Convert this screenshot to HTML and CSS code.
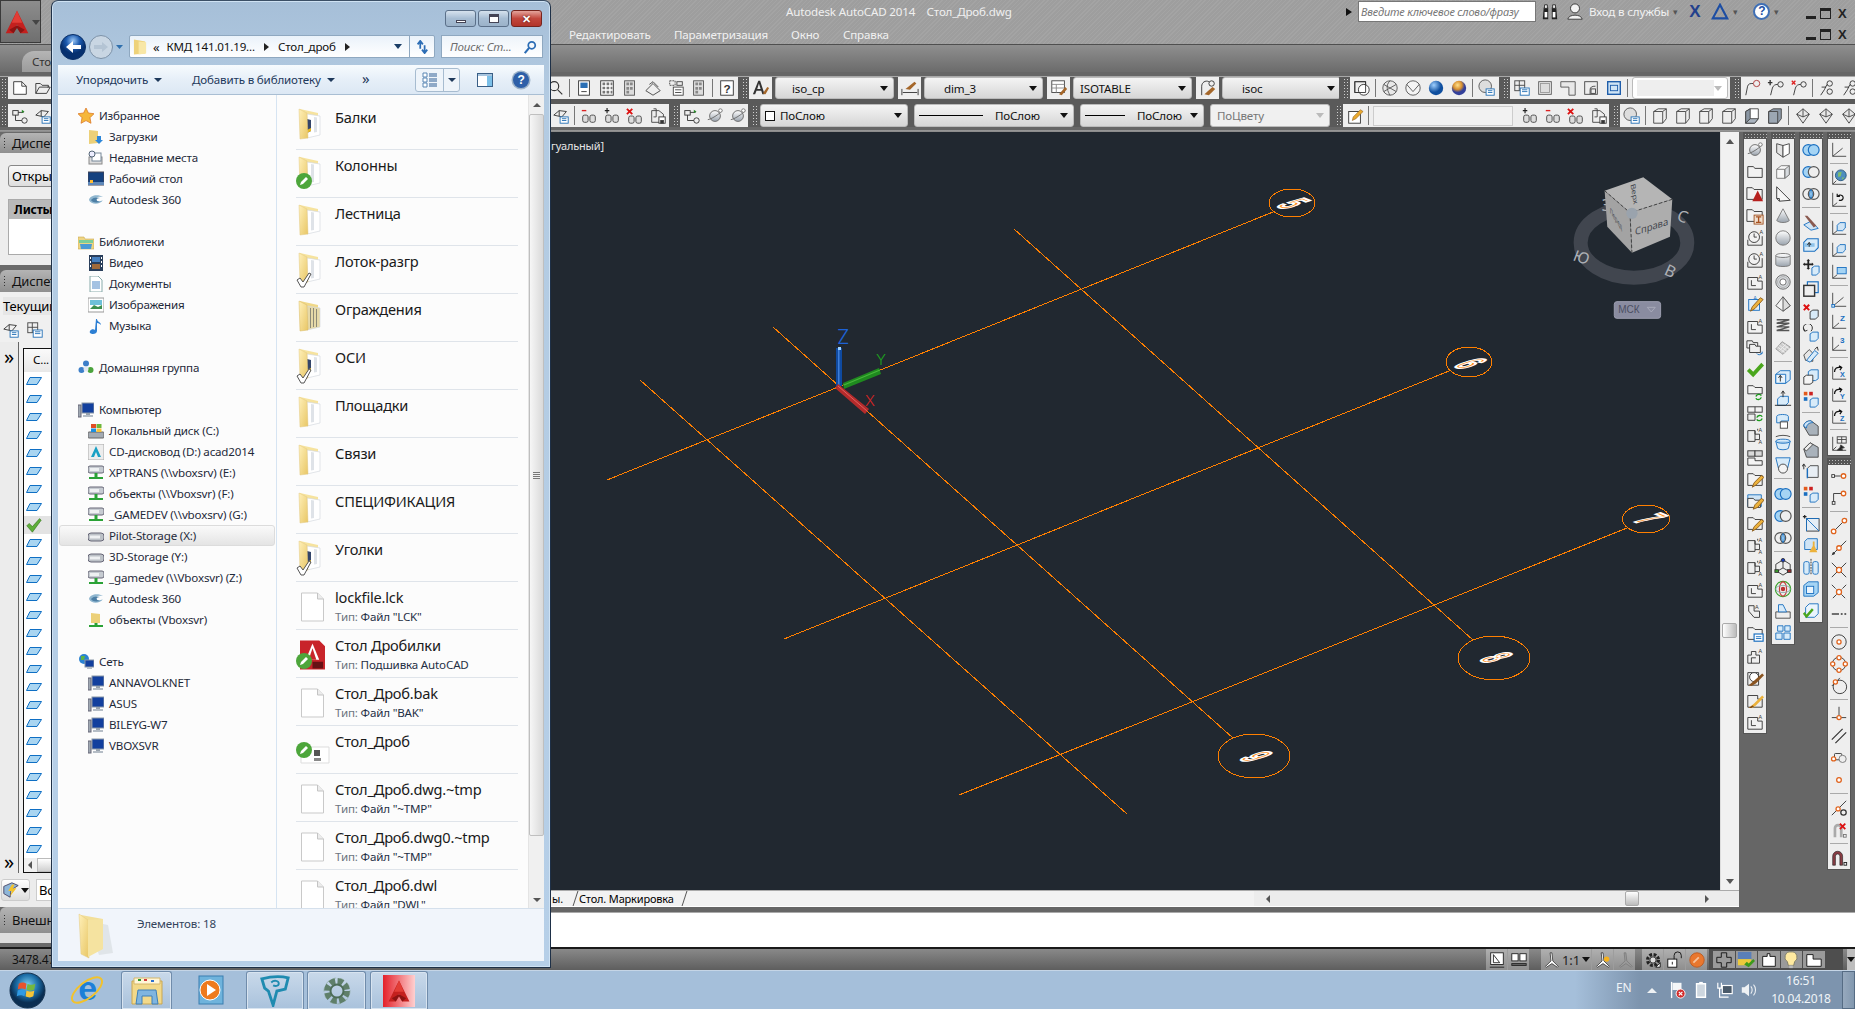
FILE: index.html
```html
<!DOCTYPE html>
<html lang="ru">
<head>
<meta charset="utf-8">
<title>Autodesk AutoCAD 2014</title>
<link rel="stylesheet" href="styles.css">
</head>
<body>
<svg class="sprite" xmlns="http://www.w3.org/2000/svg">
<defs>
<linearGradient id="fy" x1="0" y1="0" x2="1" y2="1"><stop offset="0" stop-color="#fff0b8"/><stop offset="1" stop-color="#e8c665"/></linearGradient>
<linearGradient id="sil" x1="0" y1="0" x2="0" y2="1"><stop offset="0" stop-color="#fff"/><stop offset="1" stop-color="#9aa3ad"/></linearGradient>
<radialGradient id="blueb" cx=".35" cy=".3"><stop offset="0" stop-color="#9fd0ff"/><stop offset="1" stop-color="#0f4f9f"/></radialGradient>
<radialGradient id="goldb" cx=".4" cy=".3"><stop offset="0" stop-color="#ffe08a"/><stop offset=".6" stop-color="#d89030"/><stop offset="1" stop-color="#33409a"/></radialGradient>
<radialGradient id="orb" cx=".5" cy=".35"><stop offset="0" stop-color="#7fd0f0"/><stop offset=".6" stop-color="#1c6ea8"/><stop offset="1" stop-color="#0a2e52"/></radialGradient>
<radialGradient id="backb" cx=".5" cy=".25"><stop offset="0" stop-color="#9cc8f5"/><stop offset=".55" stop-color="#1b59ae"/><stop offset="1" stop-color="#06306f"/></radialGradient>
<symbol id="folder" viewBox="0 0 24 32"><path d="M2 1l18 4v21L2 29z" fill="#f6e39e"/><path d="M9 6l13 2v19L9 30z" fill="#fff" stroke="#d5dae0" stroke-width=".7"/><path d="M13 8l3 .5V26l-3 .6z" fill="#dfe3e8"/><path d="M1 1l8 4 1 25-8 1z" fill="url(#fy)" stroke="#e2c880" stroke-width=".5"/></symbol>
<symbol id="folder-d" viewBox="0 0 24 32"><path d="M2 1l18 4v21L2 29z" fill="#f6e39e"/><path d="M9 6l13 2v19L9 30z" fill="#fff" stroke="#d5dae0" stroke-width=".7"/><path d="M9 11l4 1v11l-4 2z" fill="#33456a"/><path d="M9 22l4-2v3l-4 2z" fill="#e8b820"/><path d="M16 9l3 .5V24l-3 .5z" fill="#dfe3e8"/><path d="M1 1l8 4 1 25-8 1z" fill="url(#fy)" stroke="#e2c880" stroke-width=".5"/></symbol>
<symbol id="folder-s" viewBox="0 0 24 32"><path d="M2 1l18 4v21L2 29z" fill="#f0d888"/><path d="M9 6l13 2v19L9 30z" fill="#e6d9a8" stroke="#d5dae0" stroke-width=".7"/><path d="M12 8h1v20h-1zm3 0h1v19h-1zm3 1h1v18h-1z" fill="#8d8a78"/><path d="M1 1l8 4 1 25-8 1z" fill="url(#fy)" stroke="#d8b860" stroke-width=".5"/></symbol>
<symbol id="doc" viewBox="0 0 24 30"><path d="M1 1h16l6 6v22H1z" fill="#fff" stroke="#c9c9c9"/><path d="M17 1v6h6" fill="#ececec" stroke="#c4c4c4"/></symbol>
<symbol id="ov-edit" viewBox="0 0 16 16"><circle cx="8" cy="8" r="8" fill="#4da63b"/><path d="M4 12l1-3 5-5 2 2-5 5z" fill="#fff"/></symbol>
<symbol id="ov-check" viewBox="0 0 16 16"><path d="M1 8l3-2 3 4 6-9 2 1-7 13H5z" fill="#fff" stroke="#555"/></symbol>
<symbol id="ssm" viewBox="0 0 26 30"><path d="M0 0h20l6 6v24H0z" fill="#c8242a"/><path d="M13 3l7 17H6z" fill="#fff"/><path d="M13 8l4 12H9z" fill="#c8242a"/><rect x="13" y="22" width="11" height="7" fill="#661014"/></symbol>
<symbol id="dwg" viewBox="0 0 30 18"><path d="M1 1h28v16H1z" fill="#fff" stroke="#ddd"/><rect x="14" y="4" width="6" height="6" fill="#555"/><rect x="14" y="12" width="7" height="3" fill="#888"/></symbol>
<symbol id="n-star" viewBox="0 0 16 16"><path d="M8 0l2.400 5 5.600.7-4 4 1 5.600-5-2.700-5 2.700 1-5.600-4-4L5.600 5z" fill="#f5b73b" stroke="#d96f1c" stroke-width=".7"/></symbol>
<symbol id="n-dl" viewBox="0 0 16 16"><path d="M1 1l9 1v12l-9 1z" fill="#ecd078"/><path d="M9 7h4v4h2l-4 4-4-4h2z" fill="#2d86d8"/></symbol>
<symbol id="n-rec" viewBox="0 0 16 16"><rect x="1" y="7" width="13" height="7" fill="#ddd" stroke="#888"/><rect x="4" y="3" width="9" height="8" fill="#fff" stroke="#789"/><circle cx="4" cy="4" r="3" fill="#eef" stroke="#567"/></symbol>
<symbol id="n-desk" viewBox="0 0 16 16"><rect y="1" width="16" height="13" fill="#14417f" stroke="#445"/><rect y="11" width="16" height="3" fill="#5f88b8"/><rect x="2" y="9" width="3" height="3" fill="#fb3"/></symbol>
<symbol id="n-360" viewBox="0 0 16 16"><path d="M1 8c1-5 9-6 14-3-6-1-8 1-7 3 2 2 6 1 7 0-3 5-12 5-14 0z" fill="#8fb6cf"/><path d="M3 8c2-3 7-3 9-2-4 0-5 3 0 4-5 1-8 0-9-2z" fill="#4d7fa5"/></symbol>
<symbol id="n-lib" viewBox="0 0 16 16"><path d="M0 3h6l1 2h9v10H0z" fill="#eed583" stroke="#c9a94f" stroke-width=".6"/><rect x="1" y="6" width="14" height="3" fill="#7ccf9a"/><path d="M2 10h12l-1 5H3z" fill="#4b9ad6"/></symbol>
<symbol id="n-vid" viewBox="0 0 16 16"><rect x="1" width="14" height="16" fill="#2a3f5c"/><rect x="4" y="2" width="8" height="5" fill="#4680c0"/><rect x="4" y="9" width="8" height="5" fill="#a06a3a"/><path d="M2 2h1v2H2zm0 4h1v2H2zm0 4h1v2H2zm11-8h1v2h-1zm0 4h1v2h-1zm0 4h1v2h-1z" fill="#fff"/></symbol>
<symbol id="n-doc" viewBox="0 0 16 16"><path d="M2 0h8l4 4v12H2z" fill="#fff" stroke="#8aa"/><path d="M4 6h8M4 8h8M4 10h8M4 12h8" stroke="#4a86c5"/></symbol>
<symbol id="n-pic" viewBox="0 0 16 16"><rect width="16" height="14" y="1" fill="#fff" stroke="#999"/><rect x="2" y="3" width="12" height="5" fill="#6ec0d8"/><path d="M2 12l4-4 4 2 4-2v4z" fill="#3c8f4f"/></symbol>
<symbol id="n-mus" viewBox="0 0 16 16"><path d="M8 1l1 0c0 3 4 3 4 6-1-1-2-2-4-2v8c0 2-2 3-4 3s-4-1-3-3 4-2 5-1z" fill="#2d7fd3"/></symbol>
<symbol id="n-home" viewBox="0 0 16 16"><circle cx="8" cy="3.500" r="3" fill="#3d7fc9"/><circle cx="3.500" cy="10" r="3" fill="#3d7fc9"/><circle cx="12.500" cy="10" r="3" fill="#4ba33d"/><circle cx="8" cy="9" r="2.500" fill="#e3e8f2"/></symbol>
<symbol id="n-pc" viewBox="0 0 16 16"><rect x="4" y="1" width="12" height="10" fill="#123f9e" stroke="#8896a6"/><rect x="8" y="11" width="4" height="2" fill="#98a2ad"/><rect x="5" y="13" width="10" height="2" fill="#b5bdc6"/><rect y="3" width="3" height="12" fill="#9fa8b2" stroke="#667"/></symbol>
<symbol id="n-c" viewBox="0 0 16 16"><rect y="9" width="16" height="6" rx="1" fill="#a4abb3" stroke="#666"/><rect x="3" y="1" width="5" height="4" fill="#e14d24"/><rect x="8.500" y="1" width="5" height="4" fill="#6fb73a"/><rect x="3" y="5.500" width="5" height="3.500" fill="#1d8fe0"/><rect x="8.500" y="5.500" width="5" height="3.500" fill="#f7c33c"/></symbol>
<symbol id="n-cd" viewBox="0 0 16 16"><rect width="16" height="16" fill="#ededed" stroke="#aaa"/><path d="M8 2l5 11h-3L8 8l-2 5H3z" fill="#1aa0c4"/></symbol>
<symbol id="n-net" viewBox="0 0 16 16"><rect y="1" width="16" height="7" rx="2" fill="#c6cbd1" stroke="#667"/><rect x="2" y="3" width="9" height="3" fill="#eef0f2"/><rect x="6.500" y="8" width="3" height="4" fill="#2aa236"/><rect x="1" y="12" width="14" height="2" fill="#2aa236"/></symbol>
<symbol id="n-disk" viewBox="0 0 16 16"><rect y="5" width="16" height="8" rx="3" fill="#bcc1c7" stroke="#667"/><rect x="2" y="7.500" width="10" height="3" fill="#eef0f2"/></symbol>
<symbol id="n-nf" viewBox="0 0 16 16"><path d="M3 1l9 1v9H3z" fill="#ecd078"/><rect x="6.500" y="11" width="3" height="2" fill="#2aa236"/><rect x="1" y="13" width="14" height="2" fill="#2aa236"/></symbol>
<symbol id="n-globe" viewBox="0 0 16 16"><circle cx="6" cy="5" r="5" fill="#2a82d2"/><path d="M3 2l4 0-1 4-3 0zM8 6l2 1-2 3z" fill="#5cb344"/><rect x="7" y="6" width="9" height="7" fill="#123f9e" stroke="#8896a6"/><rect x="9" y="13" width="5" height="2" fill="#b5bdc6"/></symbol>

<symbol id="t-new" viewBox="0 0 20 20"><path d="M3 3h9l5 5v9H3z" fill="#fff" stroke="#333"/><path d="M12 3v5h5" fill="none" stroke="#333"/></symbol>
<symbol id="t-open" viewBox="0 0 20 20"><path d="M2 16V5h5l2 2h7v2H6l-4 7h12l4-7h-3" fill="#eee" stroke="#333"/></symbol>
<symbol id="t-tree" viewBox="0 0 20 20" fill="none" stroke="#333"><rect x="2" y="4" width="6" height="5"/><circle cx="15" cy="15" r="3"/><path d="M5 9v6h7M8 6h6"/><path d="M12 3l3 2-3 2z" fill="#2a8a2a" stroke="none"/></symbol>
<symbol id="t-list" viewBox="0 0 20 20" fill="none" stroke="#333"><path d="M2 9l6-5 8 1-5 6zM8 4v6"/><rect x="9" y="11" width="9" height="7" fill="#fff" stroke="#226fb5"/><path d="M11 13h5M11 15h5" stroke="#226fb5"/></symbol>
<symbol id="t-zoom" viewBox="0 0 20 20" fill="none" stroke="#333" stroke-width="1.300"><circle cx="8" cy="8" r="5"/><path d="M12 12l5 5"/></symbol>
<symbol id="t-prop" viewBox="0 0 20 20" fill="none" stroke="#333"><rect x="4" y="2" width="12" height="16" fill="#fff"/><rect x="6" y="4" width="8" height="6" fill="#2a6fb5" stroke="none"/><path d="M7 14h6"/></symbol>
<symbol id="t-grid" viewBox="0 0 20 20"><rect x="3" y="2" width="14" height="16" fill="#fff" stroke="#333"/><path d="M5 4h3v3H5zm4.500 0h3v3h-3zM14 4h2v3h-2zM5 8.500h3v3H5zm4.500 0h3v3h-3zm4.500 0h2v3h-2zM5 13h3v3H5zm4.500 0h3v3h-3zm4.500 0h2v3h-2z" fill="#777"/></symbol>
<symbol id="t-calc" viewBox="0 0 20 20"><rect x="4" y="2" width="11" height="16" fill="#ddd" stroke="#555"/><path d="M6 4h3v3H6zm4 0h3v3h-3zM6 9h3v3H6zm4 0h3v3h-3zM6 13h3v3H6z" fill="#888"/></symbol>
<symbol id="t-pal" viewBox="0 0 20 20" fill="none" stroke="#444"><path d="M2 13l8-8 8 8-8 5z" fill="#eee"/><path d="M6 6l4-3 6 6"/></symbol>
<symbol id="t-mark" viewBox="0 0 20 20" fill="none" stroke="#444"><rect x="3" y="2" width="6" height="5" stroke-dasharray="2 1"/><rect x="11" y="3" width="6" height="4"/><rect x="7" y="9" width="11" height="9" fill="#fff"/><path d="M9 12h7M9 15h7"/></symbol>
<symbol id="t-help" viewBox="0 0 20 20"><rect x="3" y="2" width="14" height="16" fill="#fff" stroke="#333"/><text x="10" y="15" class="sy-t b" text-anchor="middle" font-size="13" fill="#333">?</text></symbol>
<symbol id="t-a" viewBox="0 0 20 20"><path d="M1 17L7 2h2l5 15h-2.500l-1.200-4H5l-1.500 4zM5.800 11h3.800L7.700 5z" fill="#333"/><path d="M12 16l5-7 2 1-4 7z" fill="#a5672a"/></symbol>
<symbol id="t-dim" viewBox="0 0 20 20"><path d="M1 11v7M19 11v7M2 15h16" stroke="#333" fill="none"/><path d="M5 11l10-8 2 2-7 7z" fill="#a5672a"/></symbol>
<symbol id="t-tab" viewBox="0 0 20 20"><rect x="2" y="2" width="14" height="13" fill="#fff" stroke="#444"/><path d="M2 6h14M2 10h14M7 6v9" stroke="#888"/><path d="M10 17l7-8 2 2-6 7z" fill="#a5672a"/></symbol>
<symbol id="t-ml" viewBox="0 0 20 20"><path d="M3 18V8c0-4 4-7 8-5" fill="none" stroke="#333"/><circle cx="14" cy="5" r="3" fill="none" stroke="#333"/><path d="M6 17l9-8 3 2-7 7z" fill="#a5672a"/></symbol>
<symbol id="t-vp" viewBox="0 0 20 20" fill="none" stroke="#333"><rect x="2" y="3" width="12" height="12"/><circle cx="12" cy="12" r="6" fill="#fff"/><path d="M2 3h12v12H2z"/></symbol>
<symbol id="t-w1" viewBox="0 0 20 20" fill="none" stroke="#555"><circle cx="10" cy="10" r="8" fill="#e8e8e8"/><path d="M3 6l14 8M17 6L3 14M10 2c-6 6-2 12 0 16"/></symbol>
<symbol id="t-w2" viewBox="0 0 20 20" fill="none" stroke="#555"><circle cx="10" cy="10" r="8" fill="#f4f4f4"/><path d="M3 6l7 8 7-8"/></symbol>
<symbol id="t-bb" viewBox="0 0 20 20"><circle cx="10" cy="10" r="8" fill="url(#blueb)"/></symbol>
<symbol id="t-gb" viewBox="0 0 20 20"><circle cx="10" cy="10" r="8" fill="url(#goldb)"/></symbol>
<symbol id="t-gl" viewBox="0 0 20 20"><circle cx="8" cy="8" r="7" fill="#ddd" stroke="#555"/><rect x="9" y="11" width="9" height="7" fill="#fff" stroke="#226fb5"/><path d="M11 13h5M11 15h5" stroke="#226fb5"/></symbol>
<symbol id="t-vw" viewBox="0 0 20 20" fill="none" stroke="#444"><rect x="2" y="2" width="11" height="11"/><path d="M7 2v11M2 7h11"/><rect x="8" y="10" width="10" height="8" fill="#fff" stroke="#226fb5"/><path d="M10 12h6M10 14h6" stroke="#226fb5"/></symbol>
<symbol id="t-r1" viewBox="0 0 20 20"><rect x="3" y="3" width="14" height="14" fill="#f2f2f2" stroke="#555"/><rect x="5" y="5" width="10" height="10" fill="#ddd" stroke="#999"/></symbol>
<symbol id="t-r2" viewBox="0 0 20 20"><path d="M2 3h16v15h-7V9H2z" fill="#e8e8e8" stroke="#555"/></symbol>
<symbol id="t-r3" viewBox="0 0 20 20" fill="none" stroke="#444"><rect x="3" y="3" width="14" height="14" fill="#eee"/><path d="M9 17v-5c0-3 2-4 6-4"/><rect x="10" y="11" width="5" height="5"/></symbol>
<symbol id="t-r4" viewBox="0 0 20 20"><rect x="3" y="3" width="14" height="14" fill="#cfe4f5" stroke="#1a5aa8" stroke-width="1.500"/><rect x="6" y="7" width="8" height="6" fill="none" stroke="#1a5aa8"/></symbol>
<symbol id="t-sp1" viewBox="0 0 20 20" fill="none" stroke="#333"><path d="M2 18l2-10c1-3 3-3 6-3"/><circle cx="14" cy="5" r="3.500" stroke="#a33"/></symbol>
<symbol id="t-sp2" viewBox="0 0 20 20" fill="none" stroke="#333"><path d="M1 4h5M3.500 1v6" stroke-width="1.500"/><path d="M4 18l2-8c1-3 3-4 6-4"/><circle cx="15" cy="6" r="3"/></symbol>
<symbol id="t-sp3" viewBox="0 0 20 20" fill="none" stroke="#333"><path d="M2 2l4 4M6 2L2 6" stroke="#d22" stroke-width="1.500"/><path d="M4 18l2-8c1-3 3-4 6-4"/><circle cx="15" cy="6" r="3"/></symbol>
<symbol id="t-sp4" viewBox="0 0 20 20" fill="none" stroke="#333"><circle cx="13" cy="5" r="3"/><circle cx="13" cy="14" r="3"/><path d="M3 18l4-6 3-6M4 9h5"/></symbol>
<symbol id="t-pen" viewBox="0 0 20 20"><rect x="3" y="5" width="13" height="13" fill="#fff" stroke="#333"/><path d="M7 15l1-4 8-8 3 2-8 8z" fill="#e9a92e" stroke="#8a5a1a" stroke-width=".6"/></symbol>
<symbol id="t-addv" viewBox="0 0 20 20" fill="none" stroke="#444"><path d="M2 4h5M4.500 1v6" stroke="#222" stroke-width="1.300"/><rect x="3" y="9" width="6" height="8" rx="2" fill="#ddd"/><rect x="11" y="9" width="6" height="8" rx="2" fill="#ddd"/></symbol>
<symbol id="t-subv" viewBox="0 0 20 20" fill="none" stroke="#444"><path d="M2 4h5" stroke="#d22" stroke-width="1.500"/><rect x="3" y="9" width="6" height="8" rx="2" fill="#ddd"/><rect x="11" y="9" width="6" height="8" rx="2" fill="#ddd"/></symbol>
<symbol id="t-delv" viewBox="0 0 20 20" fill="none" stroke="#444"><path d="M1 2l6 6M7 2L1 8" stroke="#d11" stroke-width="2"/><rect x="3" y="10" width="6" height="8" rx="2" fill="#ddd"/><rect x="11" y="10" width="6" height="8" rx="2" fill="#ddd"/></symbol>
<symbol id="t-savev" viewBox="0 0 20 20" fill="none" stroke="#444"><path d="M3 4h8l5 4v9H3z"/><path d="M5 2h3v9H5" /><rect x="11" y="11" width="7" height="7" fill="#fff" stroke="#333"/><rect x="13" y="15" width="3" height="3" fill="#333"/></symbol>
<symbol id="t-iso" viewBox="0 0 20 20" fill="none" stroke="#444"><path d="M3 5l5-3h9v11l-4 5H3zM3 5h10v13M13 5l4-3"/></symbol>
<symbol id="t-iso2" viewBox="0 0 20 20" stroke="#444"><path d="M3 5l5-3h9v11l-4 5H3z" fill="#fff"/><path d="M3 5l5-3v11l-5 5z" fill="#8b97a4"/><path d="M8 13h9l-4 5H3z" fill="#aab4bf"/></symbol>
<symbol id="t-iso3" viewBox="0 0 20 20" stroke="#444"><path d="M3 5l5-3h9v11l-4 5H3z" fill="#8d99a7"/><path d="M3 5h10v13H3z" fill="#9ca7b3"/></symbol>
<symbol id="t-dia" viewBox="0 0 20 20" stroke="#444"><path d="M10 2l7 6-7 10L3 8z" fill="#e8e8e8"/><path d="M10 2v9L3 8M10 11l7-3" fill="none"/></symbol>

<symbol id="s-planet" viewBox="0 0 20 20"><circle cx="10" cy="10" r="6" fill="url(#sil)" stroke="#666"/><path d="M2 14c3 0 13-6 16-10" fill="none" stroke="#666"/><circle cx="16" cy="4" r="2" fill="#fff" stroke="#777"/></symbol>
<symbol id="s-fld" viewBox="0 0 20 20"><path d="M2 4h6l2 2h8v10H2z" fill="#f2f2f2" stroke="#333"/></symbol>
<symbol id="s-flda" viewBox="0 0 20 20"><path d="M1 3h6l2 2h9v11H1z" fill="#f2f2f2" stroke="#333"/><path d="M13 6l6 12H7z" fill="#b6201e"/></symbol>
<symbol id="s-fldi" viewBox="0 0 20 20"><path d="M1 3h6l2 2h9v11H1z" fill="#f2f2f2" stroke="#333"/><rect x="9" y="9" width="10" height="10" fill="#f0e0d0" stroke="#a05020"/><path d="M11 11h6M14 11v6M11 17h6" stroke="#a85020" stroke-width="1.500"/></symbol>
<symbol id="s-clk" viewBox="0 0 20 20" fill="none" stroke="#333"><path d="M2 12v6h16V8"/><circle cx="9" cy="9" r="6" fill="#f2f2f2"/><path d="M9 5v4h3"/><text x="15" y="6" class="sy-t" font-size="6" fill="#333" stroke="none">A</text></symbol>
<symbol id="s-lay" viewBox="0 0 20 20" fill="none" stroke="#333"><path d="M2 5h11v4h5v9H2z" fill="#f2f2f2"/><path d="M6 8v6h5"/><text x="14" y="7" class="sy-t" font-size="6" fill="#333" stroke="none">A</text></symbol>
<symbol id="s-edit" viewBox="0 0 20 20" fill="none" stroke="#1a6fc0"><rect x="3" y="5" width="12" height="12" fill="#e0effa"/><path d="M5 18l2-5 9-10 3 2-9 10z" fill="#ecb23c" stroke="#8a5a1a"/><text x="8" y="5" class="sy-t" font-size="6" fill="#1a6fc0" stroke="none">A</text></symbol>
<symbol id="s-stack" viewBox="0 0 20 20" fill="none" stroke="#333"><path d="M1 2h6l1 2h5v6H1z" fill="#eee"/><path d="M4 6h6l1 2h5v7H4z" fill="#eee"/><path d="M12 16c1 2 4 2 6 0M18 14v2h-2" stroke="#1a6fc0"/></symbol>
<symbol id="s-chk" viewBox="0 0 20 20"><path d="M1 11l3-3 4 4 9-10 3 3L8 18z" fill="#4aa61c"/></symbol>
<symbol id="s-fldr" viewBox="0 0 20 20" fill="none" stroke="#333"><path d="M2 3h6l2 2h8v7H2z" fill="#f2f2f2"/><path d="M11 15c1-3 5-3 6-1M17 16c-1 3-5 3-6 1" stroke="#1a9a1a" stroke-width="1.500"/></symbol>
<symbol id="s-splr" viewBox="0 0 20 20" fill="none" stroke="#333"><rect x="2" y="2" width="16" height="6" fill="#f2f2f2"/><path d="M10 2v6M2 10h8v7H2z"/><path d="M12 14c1-3 5-3 6-1M18 15c-1 3-5 3-6 1" stroke="#1a9a1a" stroke-width="1.500"/></symbol>
<symbol id="s-lay2" viewBox="0 0 20 20" fill="none" stroke="#333"><path d="M2 4h8v12H2z"/><path d="M10 4v4h5v6h-5M13 2v2"/><text x="14" y="6" class="sy-t" font-size="6" fill="#333" stroke="none">A</text><text x="14" y="19" class="sy-t" font-size="6" fill="#333" stroke="none">A</text></symbol>
<symbol id="s-spl" viewBox="0 0 20 20" fill="#d9d9d9" stroke="#333"><rect x="2" y="2" width="8" height="6"/><rect x="10" y="2" width="8" height="6"/><path d="M2 10h8v3h8v5H2z" fill="#f4f4f4"/></symbol>
<symbol id="s-fldp" viewBox="0 0 20 20"><path d="M2 3h6l2 2h8v11H2z" fill="#f2f2f2" stroke="#333"/><path d="M7 18l2-5 8-8 3 2-8 8z" fill="#ecb23c" stroke="#8a5a1a"/></symbol>
<symbol id="s-bfldp" viewBox="0 0 20 20"><path d="M2 2h15v13H2z" fill="#cfe4f5" stroke="#1a6fc0"/><path d="M2 6h6l2 2h6v8H2z" fill="#f2f2f2" stroke="#333"/><path d="M8 18l2-5 7-7 3 2-7 8z" fill="#ecb23c" stroke="#8a5a1a"/></symbol>
<symbol id="s-arr" viewBox="0 0 20 20" fill="none" stroke="#333"><path d="M3 3h6v6h6v7H9l-6-7z" fill="#eee"/><text x="10" y="7" class="sy-t" font-size="6" fill="#333" stroke="none">A</text></symbol>
<symbol id="s-fldl" viewBox="0 0 20 20"><path d="M2 3h6l2 2h8v11H2z" fill="#f2f2f2" stroke="#333"/><rect x="9" y="10" width="10" height="8" fill="#fff" stroke="#1a6fc0" stroke-width="1.300"/><path d="M11 13h6M11 15h6" stroke="#1a6fc0"/></symbol>
<symbol id="s-step" viewBox="0 0 20 20" fill="none" stroke="#333"><path d="M2 18V9h4V5h5v4h4v9z" fill="#eee"/><path d="M6 18v-6h5" /><text x="14" y="7" class="sy-t" font-size="6" fill="#333" stroke="none">A</text></symbol>
<symbol id="s-clkb" viewBox="0 0 20 20"><path d="M2 4h12v14H2z" fill="#eee" stroke="#333"/><circle cx="9" cy="9" r="5" fill="#fff" stroke="#333"/><path d="M3 18l5-4 10-9 2 2-9 9-5 3z" fill="#8a5420"/></symbol>
<symbol id="s-layb" viewBox="0 0 20 20"><path d="M2 5h11v4h5v9H2z" fill="#eee" stroke="#333"/><path d="M3 19l6-5 9-9 2 2-9 9-4 3z" fill="#ecb23c"/><path d="M3 19l4-3 2 1-3 2z" fill="#7a4818"/></symbol>
<symbol id="s-face" viewBox="0 0 20 20"><path d="M3 3l7 2v13l-7-5z" fill="#e4e4e4" stroke="#444"/><path d="M10 5l7-2v11l-7 4z" fill="#fff" stroke="#444"/></symbol>
<symbol id="s-cube" viewBox="0 0 20 20" stroke="#777"><path d="M3 7l5-4h9v10l-5 4H3z" fill="#f8f8f8"/><path d="M12 7l5-4v10l-5 4z" fill="#d7dbdf"/><path d="M3 7h9v10" fill="none"/></symbol>
<symbol id="s-wedge" viewBox="0 0 20 20"><path d="M3 2l15 15-12 1-3-3z" fill="#f6f6f6" stroke="#333"/><path d="M3 15h3v3" fill="none" stroke="#333"/></symbol>
<symbol id="s-cone" viewBox="0 0 20 20"><path d="M10 2l7 13c-3 3-11 3-14 0z" fill="url(#sil)" stroke="#777"/></symbol>
<symbol id="s-sph" viewBox="0 0 20 20"><circle cx="10" cy="10" r="8" fill="url(#sil)" stroke="#777"/></symbol>
<symbol id="s-cyl" viewBox="0 0 20 20"><path d="M2 5c0-3 16-3 16 0v10c0 3-16 3-16 0z" fill="url(#sil)" stroke="#777"/><path d="M2 5c0 3 16 3 16 0" fill="none" stroke="#777"/></symbol>
<symbol id="s-tor" viewBox="0 0 20 20"><circle cx="10" cy="10" r="8" fill="#d7dbdf" stroke="#666"/><circle cx="10" cy="10" r="3.500" fill="#fff" stroke="#666"/><circle cx="10" cy="10" r="6" fill="none" stroke="#aaa"/></symbol>
<symbol id="s-pyr" viewBox="0 0 20 20" stroke="#555"><path d="M10 2l8 10-8 6-8-6z" fill="#f4f4f4"/><path d="M10 2l8 10-8 6z" fill="#ddd"/></symbol>
<symbol id="s-spr" viewBox="0 0 20 20" fill="none" stroke="#555" stroke-width="1.600"><path d="M3 3h14l-14 4h14L3 11h14L3 15h14"/></symbol>
<symbol id="s-mesh" viewBox="0 0 20 20" stroke="#999" fill="#ccc"><path d="M9 3l9 6-8 8-8-6z"/><path d="M6 7l8 6M9 5l8 6M4 9l8 6M13 6l-7 7M15 8l-7 7" fill="none" stroke="#eee"/></symbol>
<symbol id="s-bbox" viewBox="0 0 20 20" stroke="#1a6fc0"><path d="M2 7l5-4h11v10l-5 4H2z" fill="#d8ebf9"/><path d="M2 7h11v10H2z" fill="#eaf4fc"/><path d="M7 15v-6M5 11l2-3 2 3" fill="none" stroke="#222"/></symbol>
<symbol id="s-bext" viewBox="0 0 20 20" stroke="#1a6fc0" fill="#d8ebf9"><path d="M4 10l3-3h9v7l-3 3H4z"/><path d="M10 8V2M8 4l2-3 2 3" fill="none" stroke="#222"/><path d="M1 17h18" stroke="#222"/></symbol>
<symbol id="s-bsw" viewBox="0 0 20 20" stroke="#1a6fc0" fill="#d8ebf9"><path d="M3 5c0-3 13-3 13 0v5H8v2H3z"/><rect x="7" y="11" width="8" height="7" fill="#fff" stroke="#444"/></symbol>
<symbol id="s-brev" viewBox="0 0 20 20" stroke="#1a6fc0" fill="#d8ebf9"><path d="M2 8c0-3 16-3 16 0l-2 8c-2 2-10 2-12 0z"/><path d="M2 3c4-2 12-2 16 0" fill="none" stroke="#444"/><path d="M2 8c0 3 16 3 16 0" fill="#a8cfee"/></symbol>
<symbol id="s-blof" viewBox="0 0 20 20" stroke="#1a6fc0" fill="#d8ebf9"><path d="M2 2h16l-3 12H5z"/><circle cx="10" cy="14" r="5" fill="#f4f4f4" stroke="#444"/></symbol>
<symbol id="s-r1" viewBox="0 0 20 20" fill="none"><circle cx="7" cy="10" r="6" fill="#a5d4f4" stroke="#1a6fc0" stroke-width="1.300"/><circle cx="13" cy="10" r="6" fill="#a5d4f4" stroke="#1a6fc0" stroke-width="1.300"/></symbol>
<symbol id="s-r2" viewBox="0 0 20 20" fill="none"><circle cx="7" cy="10" r="6" fill="#a5d4f4" stroke="#1a6fc0" stroke-width="1.300"/><circle cx="13" cy="10" r="6" fill="#eee" stroke="#555" stroke-width="1.300"/></symbol>
<symbol id="s-r3" viewBox="0 0 20 20" fill="none"><circle cx="7" cy="10" r="6" stroke="#555" stroke-width="1.300"/><circle cx="13" cy="10" r="6" stroke="#555" stroke-width="1.300"/><path d="M10 5c2 3 2 7 0 10-2-3-2-7 0-10z" fill="#a5d4f4" stroke="#1a6fc0"/></symbol>
<symbol id="s-giz" viewBox="0 0 20 20" fill="none" stroke="#333"><path d="M10 2l8 5v7l-8 5-8-5V7z"/><path d="M10 3v8M3 15l7-4 7 4"/><circle cx="10" cy="2.500" r="2" fill="#1a3fc0"/><rect x="1" y="13" width="4" height="3" fill="#3aa02a"/><rect x="15" y="13" width="4" height="3" fill="#a02a2a"/></symbol>
<symbol id="s-giz2" viewBox="0 0 20 20" fill="none"><circle cx="10" cy="10" r="8.500" stroke="#3aa02a" stroke-width="1.300"/><ellipse cx="10" cy="10" rx="4" ry="8" stroke="#c94040" stroke-width="1.300"/><ellipse cx="10" cy="10" rx="8" ry="4" stroke="#8aa" /><circle cx="10" cy="10" r="2.500" fill="#b33"/></symbol>
<symbol id="s-shl" viewBox="0 0 20 20" stroke="#444" fill="#eee"><path d="M2 11h16v7H2z"/><path d="M5 11V3h5l4 8z" fill="#d8ebf9" stroke="#1a6fc0"/></symbol>
<symbol id="s-bxs" viewBox="0 0 20 20" fill="#d8ebf9" stroke="#1a6fc0"><path d="M4 2h6v6H4zM12 2h6v6h-6zM2 10h7v7H2zM11 10h7v7h-7z"/></symbol>
<symbol id="s-swp" viewBox="0 0 20 20"><path d="M2 12l8-4 8 8-8 2z" fill="#cfe4f5" stroke="#1a6fc0"/><path d="M3 2h3l10 11-3 2z" fill="#8a5a50"/></symbol>
<symbol id="s-up" viewBox="0 0 20 20"><path d="M2 7l4-4h12v10l-4 4H2z" fill="#d8ebf9" stroke="#1a6fc0" stroke-width="1.200"/><path d="M2 8h12v4H2z" fill="#8ec3eb"/><path d="M8 12V8M6 10l2-3 2 3" fill="none" stroke="#222"/></symbol>
<symbol id="s-mov" viewBox="0 0 20 20"><path d="M7 1l2 2H8v3h3V5l2 2-2 2V8H8v3h1l-2 2-2-2h1V8H3v1L1 7l2-2v1h3V3H5z" fill="#222"/><path d="M11 11l3-2h5v7l-3 3h-5z" fill="#d8ebf9" stroke="#1a6fc0"/></symbol>
<symbol id="s-off" viewBox="0 0 20 20" fill="none"><rect x="6" y="2" width="12" height="12" stroke="#1a6fc0" stroke-width="1.300"/><rect x="2" y="6" width="12" height="12" fill="#eee" stroke="#333" stroke-width="1.600"/></symbol>
<symbol id="s-xb" viewBox="0 0 20 20"><path d="M2 3l6 6M8 3L2 9" stroke="#d11" stroke-width="2.200"/><path d="M9 11l3-2h6v7l-3 3H9z" fill="#d8ebf9" stroke="#333"/></symbol>
<symbol id="s-rot" viewBox="0 0 20 20" fill="none" stroke="#222"><path d="M3 8a5 5 0 1 1 7 0"/><path d="M2 5l1 3 3-1"/><path d="M9 11l3-2h6v7l-3 3H9z" fill="#d8ebf9" stroke="#1a6fc0"/></symbol>
<symbol id="s-cut" viewBox="0 0 20 20"><path d="M2 10l6-6 4 4v9l-8-1z" fill="#e6e6e6" stroke="#444"/><path d="M5 16l9-11 4 3-9 10z" fill="#d8ebf9" stroke="#1a6fc0"/><path d="M14 4l3-3 1 4" fill="none" stroke="#222"/></symbol>
<symbol id="s-cpy" viewBox="0 0 20 20" fill="#d8ebf9" stroke="#1a6fc0"><path d="M7 4l3-2h8v10l-3 2H7z"/><path d="M2 10l3-2h7v8l-3 2H2z" fill="#f4f4f4" stroke="#333"/></symbol>
<symbol id="s-col" viewBox="0 0 20 20" fill="#d8ebf9" stroke="#1a6fc0"><rect x="2" y="2" width="4" height="4" fill="#e25a1c" stroke="none"/><rect x="8" y="2" width="4" height="4" fill="#c22" stroke="none"/><rect x="2" y="8" width="4" height="4" fill="#1a6fc0" stroke="none"/><path d="M9 11l3-2h6v7l-3 3H9z"/></symbol>
<symbol id="s-fil" viewBox="0 0 20 20" stroke="#444"><path d="M2 8c0-4 4-6 8-6l8 6v10H8z" fill="#a9b2bb"/><path d="M2 8c0-4 4-6 8-6l2 2c-5 0-7 3-7 6z" fill="#cfe4f5" stroke="#1a6fc0"/></symbol>
<symbol id="s-chm" viewBox="0 0 20 20" stroke="#444"><path d="M2 9l7-7 9 5v11H5z" fill="#a9b2bb"/><path d="M2 9l7-7 3 2-7 7z" fill="#eee"/></symbol>
<symbol id="s-ext" viewBox="0 0 20 20" stroke="#444"><path d="M6 6l3-3h9v13H6z" fill="#e8eef4"/><path d="M2 2v5M0 4l2-3 2 3" fill="none" stroke="#222"/><path d="M6 6v11" stroke="#1a6fc0" stroke-width="1.500"/></symbol>
<symbol id="s-sec" viewBox="0 0 20 20"><path d="M1 3h4M3 1v4" stroke="#222" stroke-width="1.300"/><path d="M5 5h14v14H5z" fill="#e4edf5" stroke="#333"/><path d="M5 5l14 14M5 19V5h14" stroke="#1a6fc0" fill="none"/></symbol>
<symbol id="s-cln" viewBox="0 0 20 20"><path d="M3 6l3-3h11v12H3z" fill="#cfe4f5" stroke="#1a6fc0"/><path d="M12 6v5l-4 7h9l-3-7V6z" fill="#ecb23c"/></symbol>
<symbol id="s-mir" viewBox="0 0 20 20" fill="#d8ebf9" stroke="#1a6fc0"><rect x="2" y="4" width="6" height="14" rx="2"/><rect x="12" y="4" width="6" height="14" rx="2"/><path d="M10 1v18" stroke="#222" stroke-dasharray="2 1"/></symbol>
<symbol id="s-vb" viewBox="0 0 20 20" stroke="#1a6fc0"><path d="M2 6l5-4h11v12l-5 4H2z" fill="#a5d4f4"/><rect x="5" y="7" width="8" height="8" fill="#eaf4fc"/></symbol>
<symbol id="s-bck" viewBox="0 0 20 20"><path d="M4 6l4-4h10v11l-4 4H4z" fill="#eaf4fc" stroke="#1a6fc0"/><path d="M1 13l2-2 2 3 6-7 2 2-8 9z" fill="#4aa61c"/></symbol>
<symbol id="s-ax" viewBox="0 0 20 20" fill="none" stroke="#444"><path d="M3 2v15h15M3 17l11-9"/></symbol>
<symbol id="s-axg" viewBox="0 0 20 20" fill="none" stroke="#444"><path d="M3 2v15h15M3 17l4-4"/><circle cx="12" cy="7" r="6" fill="#4d8dbf" stroke="#27567c"/><path d="M9 4l4-1-1 5-3 1zM14 9l2 1-3 2z" fill="#7fbf6a" stroke="none"/></symbol>
<symbol id="s-axu" viewBox="0 0 20 20" fill="none" stroke="#444"><path d="M3 2v15h15M3 17l5-4"/><path d="M9 6a3 3 0 1 1 1 4M8 3v3h3" stroke="#111" stroke-width="1.300"/></symbol>
<symbol id="s-axb" viewBox="0 0 20 20" fill="none" stroke="#444"><path d="M3 2v15h15M3 17l5-4"/><path d="M8 7l3-3h6v6l-3 3H8z" fill="#cfe4f5" stroke="#1a6fc0"/></symbol>
<symbol id="s-axr" viewBox="0 0 20 20" fill="none" stroke="#444"><path d="M3 2v15h15M3 17l5-4"/><rect x="8" y="5" width="10" height="7" fill="#a5d4f4" stroke="#1a6fc0"/></symbol>
<symbol id="s-axo" viewBox="0 0 20 20" fill="none" stroke="#444"><path d="M3 2v15h15M3 17l12-10"/><rect x="2" y="15" width="3" height="3" fill="#cfe4f5" stroke="#1a6fc0"/></symbol>
<symbol id="s-axz" viewBox="0 0 20 20" fill="none" stroke="#444"><path d="M3 2v15h15M3 17l7-6"/><text x="11" y="9" class="sy-t b" font-size="9" fill="#1a6fc0" stroke="none">Z</text></symbol>
<symbol id="s-ax3" viewBox="0 0 20 20" fill="none" stroke="#444"><path d="M3 2v15h15M3 17l7-6"/><text x="11" y="9" class="sy-t b" font-size="9" fill="#1a6fc0" stroke="none">3</text></symbol>
<symbol id="s-rtx" viewBox="0 0 20 20" fill="none" stroke="#444"><path d="M3 4v14h15"/><path d="M5 10c0-4 3-6 7-5M10 3l3 2-2 3" stroke="#111" stroke-width="1.400"/><text x="11" y="16" class="sy-t b" font-size="8" fill="#1a6fc0" stroke="none">X</text></symbol>
<symbol id="s-rty" viewBox="0 0 20 20" fill="none" stroke="#444"><path d="M3 4v14h15"/><path d="M5 10c0-4 3-6 7-5M10 3l3 2-2 3" stroke="#111" stroke-width="1.400"/><text x="11" y="16" class="sy-t b" font-size="8" fill="#1a6fc0" stroke="none">Y</text></symbol>
<symbol id="s-rtz" viewBox="0 0 20 20" fill="none" stroke="#444"><path d="M3 4v14h15"/><path d="M5 10c0-4 3-6 7-5M10 3l3 2-2 3" stroke="#111" stroke-width="1.400"/><text x="11" y="16" class="sy-t b" font-size="8" fill="#1a6fc0" stroke="none">Z</text></symbol>
<symbol id="s-axm" viewBox="0 0 20 20" fill="none" stroke="#444"><path d="M3 2v15h15M3 17l4-4"/><rect x="8" y="2" width="10" height="7" fill="#eee"/><path d="M8 5h10M13 2v7"/><path d="M8 17l3-3 1-3 4 3-3 1 1 2z" fill="#222"/></symbol>
<symbol id="o-end" viewBox="0 0 20 20" fill="none" stroke="#333"><path d="M2 10h10"/><circle cx="15" cy="10" r="2.500" fill="#fff" stroke="#e0631c" stroke-width="1.400"/><rect x="2" y="8.500" width="3" height="3" fill="#fff"/></symbol>
<symbol id="o-cor" viewBox="0 0 20 20" fill="none" stroke="#333"><path d="M4 14V5h10"/><circle cx="15" cy="5" r="2.500" fill="#fff" stroke="#e0631c" stroke-width="1.400"/><rect x="2.500" y="14" width="3" height="3" fill="#fff"/></symbol>
<symbol id="o-lin" viewBox="0 0 20 20" fill="none" stroke="#333"><path d="M2 18L18 2"/><circle cx="4" cy="16" r="2.500" fill="#fff" stroke="#e0631c" stroke-width="1.400"/><circle cx="16" cy="4" r="2.500" fill="#fff" stroke="#e0631c" stroke-width="1.400"/></symbol>
<symbol id="o-mid" viewBox="0 0 20 20" fill="none" stroke="#333"><path d="M2 18L18 2"/><circle cx="10" cy="10" r="2.500" fill="#fff" stroke="#e0631c" stroke-width="1.400"/><circle cx="4" cy="16" r="1" fill="#333"/></symbol>
<symbol id="o-x" viewBox="0 0 20 20" fill="none" stroke="#333"><path d="M2 2l16 16M18 2L2 18"/><circle cx="10" cy="10" r="2.800" fill="#fff" stroke="#e0631c" stroke-width="1.400"/></symbol>
<symbol id="o-xd" viewBox="0 0 20 20" fill="none" stroke="#333"><path d="M2 2l16 16M18 2L2 18" stroke-dasharray="6 1.500"/><circle cx="10" cy="10" r="2.800" fill="#fff" stroke="#e0631c" stroke-width="1.400"/></symbol>
<symbol id="o-ext" viewBox="0 0 20 20" fill="none" stroke="#333"><path d="M2 10h8" stroke-width="1.500"/><path d="M12 10h7" stroke-dasharray="2 2" stroke-width="1.500"/></symbol>
<symbol id="o-cen" viewBox="0 0 20 20" fill="none"><circle cx="10" cy="10" r="8" stroke="#333" fill="#eee"/><circle cx="10" cy="10" r="2.300" fill="#fff" stroke="#e0631c" stroke-width="1.400"/></symbol>
<symbol id="o-qua" viewBox="0 0 20 20" fill="none" stroke="#e0631c" stroke-width="1.400"><circle cx="10" cy="10" r="7.500" stroke="#333" stroke-width="1"/><circle cx="10" cy="3" r="2.300" fill="#fff"/><circle cx="10" cy="17" r="2.300" fill="#fff"/><circle cx="3" cy="10" r="2.300" fill="#fff"/><circle cx="17" cy="10" r="2.300" fill="#fff"/></symbol>
<symbol id="o-tan" viewBox="0 0 20 20" fill="none"><circle cx="11" cy="11" r="7.500" stroke="#333" fill="#eee"/><path d="M2 10L11 1" stroke="#333"/><circle cx="6" cy="5.500" r="2.300" fill="#fff" stroke="#e0631c" stroke-width="1.400"/></symbol>
<symbol id="o-per" viewBox="0 0 20 20" fill="none" stroke="#333"><path d="M10 2v14M2 14h16"/><circle cx="10" cy="14" r="2.300" fill="#fff" stroke="#e0631c" stroke-width="1.400"/></symbol>
<symbol id="o-par" viewBox="0 0 20 20" fill="none" stroke="#333" stroke-width="1.300"><path d="M2 14L14 2M6 18L18 6"/></symbol>
<symbol id="o-ins" viewBox="0 0 20 20" fill="none" stroke="#333"><rect x="5" y="5" width="8" height="7" rx="1"/><circle cx="14" cy="11" r="4" fill="#eee" stroke="#777"/><circle cx="4" cy="11" r="2.300" fill="#fff" stroke="#e0631c" stroke-width="1.400"/></symbol>
<symbol id="o-nod" viewBox="0 0 20 20"><circle cx="10" cy="10" r="2.600" fill="#fff" stroke="#e0631c" stroke-width="1.400"/></symbol>
<symbol id="o-nea" viewBox="0 0 20 20" fill="none" stroke="#333"><path d="M2 18L18 2"/><circle cx="9" cy="11" r="2.300" fill="#fff" stroke="#e0631c" stroke-width="1.400"/><circle cx="15" cy="15" r="3" stroke-width="1.400"/></symbol>
<symbol id="o-mag1" viewBox="0 0 20 20"><path d="M4 18V8a5 5 0 0 1 10 0v10h-3V8a2 2 0 0 0-4 0v10z" fill="#aaa"/><path d="M11 3l6 6M17 3l-6 6" stroke="#d11" stroke-width="2"/><rect x="15" y="15" width="3" height="3" fill="none" stroke="#777"/></symbol>
<symbol id="o-mag2" viewBox="0 0 20 20"><path d="M3 18V8a5.500 5.500 0 0 1 11 0v10h-3V8a2.500 2.500 0 0 0-5 0v10z" fill="#8a3c44" stroke="#222" stroke-width=".7"/><rect x="15.500" y="15" width="3" height="3" fill="none" stroke="#222"/></symbol>
<symbol id="sb-ang" viewBox="0 0 20 20" fill="none" stroke="#222"><rect x="3" y="2" width="14" height="13" fill="#fff"/><path d="M6 13V4l7 9zM2 18h16"/></symbol>
<symbol id="sb-two" viewBox="0 0 20 20" stroke="#222" fill="#fff"><rect x="2" y="3" width="7" height="8"/><rect x="11" y="3" width="7" height="8"/><rect x="2" y="14" width="16" height="2" fill="#666"/></symbol>
<symbol id="sb-an" viewBox="0 0 20 20"><path d="M9 2h2l1 9 6 6-1 1-6-4-6 4-1-1 6-6z" fill="#fff" stroke="#222" stroke-width=".8"/></symbol>
<symbol id="sb-an2" viewBox="0 0 20 20"><path d="M8 2h2l1 9 6 6-1 1-6-4-6 4-1-1 6-6z" fill="#fff" stroke="#222" stroke-width=".8"/><circle cx="14" cy="9" r="3" fill="#f6b11c"/></symbol>
<symbol id="sb-an3" viewBox="0 0 20 20"><path d="M9 2h2l1 9 6 6-1 1-6-4-6 4-1-1 6-6z" fill="#9a9a9a" stroke="#777" stroke-width=".8"/></symbol>
<symbol id="sb-gear" viewBox="0 0 20 20"><circle cx="10" cy="10" r="6" fill="none" stroke="#222" stroke-width="3.600" stroke-dasharray="3 1.700"/><circle cx="10" cy="10" r="3.500" fill="#ddd" stroke="#222"/><path d="M13 18l5-5v5z" fill="#fff" stroke="#111"/></symbol>
<symbol id="sb-lock" viewBox="0 0 20 20" fill="none" stroke="#111"><rect x="2" y="9" width="10" height="9" fill="#fff"/><path d="M9 9V5a4 4 0 0 1 8 0v3"/><path d="M7 12v3"/></symbol>
<symbol id="sb-or" viewBox="0 0 20 20"><circle cx="10" cy="10" r="8" fill="#e9772e" stroke="#bb5a20"/><path d="M6 13l6-6" stroke="#f7c29c" stroke-width="2"/></symbol>
<symbol id="sb-plus" viewBox="0 0 20 20" fill="none" stroke="#111"><path d="M7 2h6v5h5v6h-5v5H7v-5H2V7h5z"/></symbol>
<symbol id="sb-ok" viewBox="0 0 20 20"><rect x="1" y="1" width="15" height="15" fill="#5a7fb8"/><rect x="1" y="9" width="15" height="7" fill="#ecc93c"/><path d="M8 15l3-3 2 2 5-5 2 2-7 7z" fill="#3c9a1c"/></symbol>
<symbol id="sb-clip" viewBox="0 0 20 20" fill="#fff" stroke="#111"><path d="M3 6h5V3h3v3h6v11H3z"/></symbol>
<symbol id="sb-bulb" viewBox="0 0 20 20"><path d="M10 1a6 6 0 0 1 4 11l-1 4H7l-1-4a6 6 0 0 1 4-11z" fill="#ffeaa0" stroke="#776"/><rect x="8" y="16" width="4" height="3" fill="#bbb"/></symbol>
<symbol id="sb-bf" viewBox="0 0 20 20" fill="#fff" stroke="#111"><path d="M2 4h7v5h9v8H2z"/></symbol>
<symbol id="sb-win" viewBox="0 0 20 20" fill="#fff" stroke="#111"><rect x="2" y="2" width="16" height="16"/><path d="M2 5h16" /><path d="M13 3.500h1m1 0h1" stroke="#666"/></symbol>
<symbol id="tr-flag" viewBox="0 0 20 20"><path d="M4 1v18" stroke="#fff" stroke-width="1.500"/><path d="M5 2h10v8H5z" fill="#f4f6f8"/><circle cx="14" cy="14" r="5" fill="#d22c2c" stroke="#fff"/><path d="M12 12l4 4M16 12l-4 4" stroke="#fff" stroke-width="1.300"/></symbol>
<symbol id="tr-bat" viewBox="0 0 20 20"><path d="M5 3h10v15H5z" fill="#cdd6df" stroke="#fff" stroke-width="1.500"/><rect x="8" y="1" width="4" height="2" fill="#fff"/></symbol>
<symbol id="tr-net" viewBox="0 0 20 20" fill="none" stroke="#fff" stroke-width="1.300"><path d="M2 2v6h4V2M4 8v10h10"/><rect x="7" y="5" width="11" height="9" fill="#4a5a6a"/></symbol>
<symbol id="tr-spk" viewBox="0 0 20 20"><path d="M2 7h3l5-4v14l-5-4H2z" fill="#eef1f4"/><path d="M12 6c2 2 2 6 0 8M15 4c3 3 3 9 0 12" fill="none" stroke="#eef1f4" stroke-width="1.200"/></symbol>
<symbol id="acad" viewBox="0 0 30 30"><path d="M15 2L28 28H19L15 18 11 28H2z" fill="#c4201e"/><path d="M15 2l6 14H9z" fill="#e23d36"/><path d="M6 24l9-5 9 5-5 4-4-6-4 6z" fill="#8c1312"/></symbol>
<symbol id="para" viewBox="0 0 16 8"><path d="M4 .5h11.500L11 7.500H.5z" fill="#a9d5f1" stroke="#0f6fc4"/></symbol>
</defs>
</svg>

<div class="desk">
  <div class="app">
    <header class="title">
      <div class="appbtn"><svg class="logo"><use href="#acad"/></svg><span class="caret"></span></div>
      <div class="titletext">Autodesk AutoCAD 2014&nbsp;&nbsp;&nbsp;&nbsp;Стол_Дроб.dwg</div>
      <div class="menus"><span>Редактировать</span><span>Параметризация</span><span>Окно</span><span>Справка</span></div>
      <div class="infocenter">
        <span class="tri-r"></span>
        <div class="search-box">Введите ключевое слово/фразу</div>
        <svg class="i18" viewBox="0 0 20 20"><path d="M3 5h5v13H2zM12 5h5l1 13h-6z" fill="#222"/><path d="M4 2h3v4H4zm9 0h3v4h-3z" fill="#fff" stroke="#222"/><rect x="4" y="10" width="3" height="6" fill="#fff"/><rect x="13" y="10" width="3" height="6" fill="#fff"/></svg>
        <svg class="i18 ic-user" viewBox="0 0 20 20"><circle cx="10" cy="6" r="5" fill="#f2f2f2" stroke="#333"/><path d="M2 18c1-6 15-6 16 0z" fill="#f2f2f2" stroke="#333"/></svg>
        <span class="login">Вход в службы</span><span class="mini">▾</span>
        <span class="x-mark">X</span>
        <svg class="i18 ic-tri" viewBox="0 0 20 20"><path d="M10 2l8 15H2z" fill="none" stroke="#1d4ea3" stroke-width="2.400"/></svg><span class="mini">▾</span>
        <span class="help-c">?</span><span class="mini">▾</span>
        <div class="wctl"><div class="wrow"><span class="w-min"></span><span class="w-max"></span><span class="w-x">X</span></div><div class="wrow"><span class="w-min"></span><span class="w-max"></span><span class="w-x">X</span></div></div>
      </div>
    </header>
    <div class="ribbonband"><div class="doc-tab"><span>Стол_Дроб</span></div></div>
    <div class="tbrow">
      <div class="tg g1a"><span class="grip"></span><span class="slot"><svg class="i"><use href="#t-new"/></svg></span><span class="slot"><svg class="i"><use href="#t-open"/></svg></span>
        <span class="push"></span>
        <span class="slot"><svg class="i"><use href="#t-zoom"/></svg></span><span class="sep"></span><span class="slot"><svg class="i"><use href="#t-prop"/></svg></span><span class="slot"><svg class="i"><use href="#t-grid"/></svg></span><span class="slot"><svg class="i"><use href="#t-calc"/></svg></span><span class="slot"><svg class="i"><use href="#t-pal"/></svg></span><span class="slot"><svg class="i"><use href="#t-mark"/></svg></span><span class="slot"><svg class="i"><use href="#t-calc"/></svg></span><span class="sep"></span><span class="slot"><svg class="i"><use href="#t-help"/></svg></span></div>
      <div class="tg g1b"><span class="grip"></span>
        <span class="slot"><svg class="i"><use href="#t-a"/></svg></span><div class="combo c119"><span class="c-txt c1">iso_cp</span><span class="c-arr"></span></div>
        <span class="slot"><svg class="i"><use href="#t-dim"/></svg></span><div class="combo c119"><span class="c-txt center">dim_3</span><span class="c-arr"></span></div>
        <span class="slot"><svg class="i"><use href="#t-tab"/></svg></span><div class="combo c119"><span class="c-txt">ISOTABLE</span><span class="c-arr"></span></div>
        <span class="slot"><svg class="i"><use href="#t-ml"/></svg></span><div class="combo c119"><span class="c-txt center">isoc</span><span class="c-arr"></span></div></div>
      <div class="tg g1c"><span class="grip"></span><span class="slot"><svg class="i"><use href="#t-vp"/></svg></span><span class="sep"></span><span class="slot"><svg class="i"><use href="#t-w1"/></svg></span><span class="slot"><svg class="i"><use href="#t-w2"/></svg></span><span class="slot"><svg class="i"><use href="#t-bb"/></svg></span><span class="slot"><svg class="i"><use href="#t-gb"/></svg></span><span class="sep"></span><span class="slot"><svg class="i"><use href="#t-gl"/></svg></span></div>
      <div class="tg g1d"><span class="grip"></span><span class="slot"><svg class="i"><use href="#t-vw"/></svg></span><span class="slot"><svg class="i"><use href="#t-r1"/></svg></span><span class="slot"><svg class="i"><use href="#t-r2"/></svg></span><span class="slot"><svg class="i"><use href="#t-r3"/></svg></span><span class="slot"><svg class="i"><use href="#t-r4"/></svg></span><span class="sep"></span><div class="combo c96 blank"><span class="c-txt"></span><span class="c-arr off"></span></div></div>
      <div class="tg g1e"><span class="grip"></span><span class="slot"><svg class="i"><use href="#t-sp1"/></svg></span><span class="slot"><svg class="i"><use href="#t-sp2"/></svg></span><span class="slot"><svg class="i"><use href="#t-sp3"/></svg></span><span class="sep"></span><span class="slot"><svg class="i"><use href="#t-sp4"/></svg></span><span class="slot"><svg class="i"><use href="#t-sp4"/></svg></span></div>
    </div>
    <div class="tbrow second">
      <div class="tg g2a"><span class="grip"></span><span class="slot"><svg class="i"><use href="#t-tree"/></svg></span><span class="slot"><svg class="i"><use href="#t-list"/></svg></span>
        <span class="push"></span>
        <span class="slot"><svg class="i"><use href="#t-list"/></svg></span><span class="sep"></span><span class="slot"><svg class="i"><use href="#t-subv"/></svg></span><span class="slot"><svg class="i"><use href="#t-addv"/></svg></span><span class="slot"><svg class="i"><use href="#t-delv"/></svg></span><span class="slot"><svg class="i"><use href="#t-savev"/></svg></span></div>
      <div class="tg g2b"><span class="grip"></span><span class="slot"><svg class="i"><use href="#t-tree"/></svg></span><span class="slot"><svg class="i"><use href="#s-planet"/></svg></span><span class="slot"><svg class="i"><use href="#s-planet"/></svg></span></div>
      <div class="tg g2c"><span class="grip"></span>
        <div class="combo c148"><span class="swatch"></span><span class="c-txt">ПоСлою</span><span class="c-arr"></span></div>
        <div class="combo c160"><span class="ltline l1"></span><span class="c-txt">ПоСлою</span><span class="c-arr"></span></div>
        <div class="combo c124"><span class="ltline l2"></span><span class="c-txt">ПоСлою</span><span class="c-arr"></span></div>
        <div class="combo c120 dis"><span class="c-txt">ПоЦвету</span><span class="c-arr off"></span></div></div>
      <div class="tg g2d"><span class="grip"></span><span class="slot"><svg class="i"><use href="#t-pen"/></svg></span><span class="sep"></span><div class="textbox"></div><span class="slot"><svg class="i"><use href="#t-addv"/></svg></span><span class="slot"><svg class="i"><use href="#t-subv"/></svg></span><span class="slot"><svg class="i"><use href="#t-delv"/></svg></span><span class="slot"><svg class="i"><use href="#t-savev"/></svg></span></div>
      <div class="tg g2e"><span class="grip"></span><span class="slot"><svg class="i"><use href="#t-gl"/></svg></span><span class="sep"></span><span class="slot"><svg class="i"><use href="#t-iso"/></svg></span><span class="slot"><svg class="i"><use href="#t-iso"/></svg></span><span class="slot"><svg class="i"><use href="#t-iso"/></svg></span><span class="slot"><svg class="i"><use href="#t-iso"/></svg></span><span class="slot"><svg class="i"><use href="#t-iso2"/></svg></span><span class="slot"><svg class="i"><use href="#t-iso3"/></svg></span><span class="sep"></span><span class="slot"><svg class="i"><use href="#t-dia"/></svg></span><span class="slot"><svg class="i"><use href="#t-dia"/></svg></span><span class="slot"><svg class="i"><use href="#t-dia"/></svg></span></div>
    </div>
    <div class="under"></div>

    <div class="main">
      <aside class="side">
        <div class="p-hdr first"><span class="dots"></span>Диспетчер подшивок</div>
        <div class="p-body one">
          <div class="open-btn">Открыть</div>
          <div class="sheets"><div class="sheets-h">Листы</div><div class="sheets-b"></div></div>
        </div>
        <div class="p-gap"></div>
        <div class="p-hdr two"><span class="dots"></span>Диспетчер слоёв</div>
        <div class="cur-row"><span>Текущий слой: 0</span></div>
        <div class="tool-row"><svg class="i"><use href="#t-list"/></svg><svg class="i"><use href="#t-vw"/></svg></div>
        <div class="layer-wrap">
          <div class="rail"><span>»</span><span>»</span></div>
          <div class="layers">
            <div class="l-head">С...</div>
            <div class="l-rows">
              <div class="l-row"><svg class="para"><use href="#para"/></svg></div><div class="l-row"><svg class="para"><use href="#para"/></svg></div><div class="l-row"><svg class="para"><use href="#para"/></svg></div><div class="l-row"><svg class="para"><use href="#para"/></svg></div><div class="l-row"><svg class="para"><use href="#para"/></svg></div><div class="l-row"><svg class="para"><use href="#para"/></svg></div><div class="l-row"><svg class="para"><use href="#para"/></svg></div><div class="l-row"><svg class="para"><use href="#para"/></svg></div>
              <div class="l-row cur"><svg class="cmk" viewBox="0 0 20 20"><path d="M1 11l3-3 4 4 9-10 2 2L8 19z" fill="#5fae3a" stroke="#2c6d18" stroke-width=".7"/></svg></div>
              <div class="l-row"><svg class="para"><use href="#para"/></svg></div><div class="l-row"><svg class="para"><use href="#para"/></svg></div><div class="l-row"><svg class="para"><use href="#para"/></svg></div><div class="l-row"><svg class="para"><use href="#para"/></svg></div><div class="l-row"><svg class="para"><use href="#para"/></svg></div><div class="l-row"><svg class="para"><use href="#para"/></svg></div><div class="l-row"><svg class="para"><use href="#para"/></svg></div><div class="l-row"><svg class="para"><use href="#para"/></svg></div><div class="l-row"><svg class="para"><use href="#para"/></svg></div><div class="l-row"><svg class="para"><use href="#para"/></svg></div><div class="l-row"><svg class="para"><use href="#para"/></svg></div><div class="l-row"><svg class="para"><use href="#para"/></svg></div><div class="l-row"><svg class="para"><use href="#para"/></svg></div><div class="l-row"><svg class="para"><use href="#para"/></svg></div><div class="l-row"><svg class="para"><use href="#para"/></svg></div><div class="l-row"><svg class="para"><use href="#para"/></svg></div><div class="l-row"><svg class="para"><use href="#para"/></svg></div><div class="l-row"><svg class="para"><use href="#para"/></svg></div>
            </div>
            <div class="l-scroll"><span class="tri-l"></span><span class="l-thumb"></span></div>
          </div>
        </div>
        <div class="foot-row"><div class="foot-ic"><svg class="i" viewBox="0 0 20 20"><path d="M2 6l9-4 7 3-8 5-1 8-7-4z" fill="#8eb6d8" stroke="#446"/><path d="M11 4l-4 7h4l-2 6 7-9h-4l2-4z" fill="#f3c22a"/></svg><span class="c-arr"></span></div><div class="foot-in">Все</div></div>
        <div class="p-hdr three"><span class="dots"></span>Внешние ссылки</div>
        <div class="p-end"></div>
      </aside>
      <div class="work">
        <div class="work-top">
          <div class="drawing">
            <div class="viewrow">
              <div class="canvas">
                <svg class="cad" viewBox="551 132 1169 758" xmlns="http://www.w3.org/2000/svg">
                  <g class="cad-l">
                    <line x1="607" y1="480" x2="1273" y2="212"/><line x1="784" y1="639" x2="1449" y2="371"/><line x1="959" y1="795" x2="1627" y2="528"/>
                    <line x1="640" y1="380" x2="1127" y2="814"/><line x1="773" y1="327" x2="1233" y2="738"/><line x1="1014" y1="229" x2="1473" y2="640"/>
                    <ellipse cx="1292" cy="203" rx="23" ry="14"/><ellipse cx="1469" cy="362" rx="23" ry="15"/><ellipse cx="1646" cy="519" rx="23.500" ry="14"/><ellipse cx="1494" cy="658" rx="36" ry="22"/><ellipse cx="1254" cy="756" rx="36" ry="22"/>
                  </g>
                  <g class="cad-n">
                    <text transform="matrix(1.300 .55 -3 .95 1292 204)" y="4" text-anchor="middle">5</text>
                    <text transform="matrix(1.300 .55 -3 .95 1469 364)" y="4" text-anchor="middle">6</text>
                    <text transform="matrix(1.300 .55 -3 .95 1649 519)" y="4" text-anchor="middle">7</text>
                    <text transform="matrix(1.300 .55 -3 .95 1495 658)" y="4" text-anchor="middle">8</text>
                    <text transform="matrix(1.300 .55 -3 .95 1255 757)" y="4" text-anchor="middle">9</text>
                  </g>
                  <g class="ucs">
                    <path d="M836 348h6v38h-6z" fill="#0f4aa0"/><path d="M838 348h1.500v38H838z" fill="#3f7ed8"/><rect x="838" y="347" width="3" height="3" fill="#9fd3ff"/>
                    <path d="M843 383l36-15 2 6-37 15z" fill="#1f8a1f"/><path d="M844 385l36-15" stroke="#49b53c" stroke-width="1.200" fill="none"/>
                    <path d="M838 384l31 25-4 5-30-26z" fill="#b52b2b"/><path d="M838 386l29 25" stroke="#e06060" fill="none"/>
                    <text x="837" y="344" class="u-z">Z</text><text x="876" y="365" class="u-y">Y</text><text x="865" y="406" class="u-x">X</text>
                  </g>
                  <g transform="translate(1200 170) scale(.3333)">
                    <ellipse cx="1302" cy="218" rx="160" ry="105" fill="none" stroke="#41464f" stroke-width="42"/>
                    <text class="vc-t" transform="translate(1205 122)">З</text>
                    <text class="vc-t" transform="translate(1428 150) rotate(20)">С</text>
                    <text class="vc-t" transform="matrix(.95 .3 -.35 .9 1116 270)">Ю</text>
                    <text class="vc-t" transform="translate(1390 312) rotate(25)">В</text>
                    <path d="M1214 62l116-40 87 66-127 40z" fill="#b5b5b5"/>
                    <path d="M1290 128l127-40-7 112-114 48z" fill="#adadad"/>
                    <path d="M1214 62l76 66 6 120-74-78z" fill="#a3a3a3"/>
                    <path d="M1214 62l76 66 127-40M1290 128l6 120" fill="none" stroke="#333" stroke-width="2.500" stroke-dasharray="10 6"/>
                    <circle cx="1296" cy="130" r="17" fill="#9aa3ad"/>
                    <text class="vc-f" transform="matrix(.95 -.3 0 1 1305 196)" font-size="30">Справа</text>
                    <text class="vc-f" transform="matrix(.15 .95 -.7 .25 1292 44)" font-size="28">Верх</text>
                    <text class="vc-f" transform="matrix(.5 .75 0 1 1230 128)" font-size="24">Перед</text>
                    <rect x="1243" y="395" width="139" height="50" rx="8" fill="#8a8ca0" stroke="#9d9fb0" stroke-width="3"/>
                    <text x="1255" y="428" class="vc-m">МСК</text><path d="M1342 412h24l-12 14z" fill="none" stroke="#aeb0bf" stroke-width="2.500"/>
                  </g>
                </svg>
                <div class="vp-label">гуальный]</div>
              </div>
              <div class="vscroll"><span class="tri-u"></span><span class="v-thumb"></span><span class="tri-d"></span></div>
            </div>
            <div class="tabsrow">
              <span class="tab-prev">ы.</span><span class="tab-cur">Стол. Маркировка</span>
              <div class="hscroll"><span class="tri-l"></span><span class="h-thumb"></span><span class="tri-rr"></span></div>
            </div>
          </div>
          <div class="strips">
            <div class="strip">
              <span class="s-grip"></span>
              <span class="s-i"><svg class="i"><use href="#s-planet"/></svg></span><span class="s-i"><svg class="i"><use href="#s-fld"/></svg></span><span class="s-i"><svg class="i"><use href="#s-flda"/></svg></span><span class="s-i"><svg class="i"><use href="#s-fldi"/></svg></span><span class="s-i"><svg class="i"><use href="#s-clk"/></svg></span><span class="s-i"><svg class="i"><use href="#s-clk"/></svg></span><span class="s-i"><svg class="i"><use href="#s-lay"/></svg></span><span class="s-i"><svg class="i"><use href="#s-edit"/></svg></span><span class="s-i"><svg class="i"><use href="#s-lay"/></svg></span><span class="s-i"><svg class="i"><use href="#s-stack"/></svg></span><span class="s-i"><svg class="i"><use href="#s-chk"/></svg></span><span class="s-i"><svg class="i"><use href="#s-fldr"/></svg></span><span class="s-i"><svg class="i"><use href="#s-splr"/></svg></span><span class="s-i"><svg class="i"><use href="#s-lay2"/></svg></span><span class="s-i"><svg class="i"><use href="#s-spl"/></svg></span><span class="s-i"><svg class="i"><use href="#s-fldp"/></svg></span><span class="s-i"><svg class="i"><use href="#s-bfldp"/></svg></span><span class="s-i"><svg class="i"><use href="#s-fldp"/></svg></span><span class="s-i"><svg class="i"><use href="#s-lay2"/></svg></span><span class="s-i"><svg class="i"><use href="#s-lay2"/></svg></span><span class="s-i"><svg class="i"><use href="#s-lay"/></svg></span><span class="s-i"><svg class="i"><use href="#s-arr"/></svg></span><span class="s-i"><svg class="i"><use href="#s-fldl"/></svg></span><span class="s-i"><svg class="i"><use href="#s-step"/></svg></span><span class="s-i"><svg class="i"><use href="#s-clkb"/></svg></span><span class="s-i"><svg class="i"><use href="#s-layb"/></svg></span><span class="s-i"><svg class="i"><use href="#s-lay"/></svg></span>
            </div>
            <div class="strip wide-sep">
              <span class="s-grip"></span>
              <span class="s-i"><svg class="i"><use href="#s-face"/></svg></span><span class="s-i"><svg class="i"><use href="#s-cube"/></svg></span><span class="s-i"><svg class="i"><use href="#s-wedge"/></svg></span><span class="s-i"><svg class="i"><use href="#s-cone"/></svg></span><span class="s-i"><svg class="i"><use href="#s-sph"/></svg></span><span class="s-i"><svg class="i"><use href="#s-cyl"/></svg></span><span class="s-i"><svg class="i"><use href="#s-tor"/></svg></span><span class="s-i"><svg class="i"><use href="#s-pyr"/></svg></span><span class="s-i"><svg class="i"><use href="#s-spr"/></svg></span><span class="s-i"><svg class="i"><use href="#s-mesh"/></svg></span><span class="s-sep"></span><span class="s-i"><svg class="i"><use href="#s-bbox"/></svg></span><span class="s-i"><svg class="i"><use href="#s-bext"/></svg></span><span class="s-i"><svg class="i"><use href="#s-bsw"/></svg></span><span class="s-i"><svg class="i"><use href="#s-brev"/></svg></span><span class="s-i"><svg class="i"><use href="#s-blof"/></svg></span><span class="s-sep"></span><span class="s-i"><svg class="i"><use href="#s-r1"/></svg></span><span class="s-i"><svg class="i"><use href="#s-r2"/></svg></span><span class="s-i"><svg class="i"><use href="#s-r3"/></svg></span><span class="s-sep"></span><span class="s-i"><svg class="i"><use href="#s-giz"/></svg></span><span class="s-i"><svg class="i"><use href="#s-giz2"/></svg></span><span class="s-i"><svg class="i"><use href="#s-shl"/></svg></span><span class="s-i"><svg class="i"><use href="#s-bxs"/></svg></span>
            </div>
            <div class="strip wide-sep">
              <span class="s-grip"></span>
              <span class="s-i"><svg class="i"><use href="#s-r1"/></svg></span><span class="s-i"><svg class="i"><use href="#s-r2"/></svg></span><span class="s-i"><svg class="i"><use href="#s-r3"/></svg></span><span class="s-sep"></span><span class="s-i"><svg class="i"><use href="#s-swp"/></svg></span><span class="s-i"><svg class="i"><use href="#s-up"/></svg></span><span class="s-i"><svg class="i"><use href="#s-mov"/></svg></span><span class="s-i"><svg class="i"><use href="#s-off"/></svg></span><span class="s-i"><svg class="i"><use href="#s-xb"/></svg></span><span class="s-i"><svg class="i"><use href="#s-rot"/></svg></span><span class="s-i"><svg class="i"><use href="#s-cut"/></svg></span><span class="s-i"><svg class="i"><use href="#s-cpy"/></svg></span><span class="s-i"><svg class="i"><use href="#s-col"/></svg></span><span class="s-sep"></span><span class="s-i"><svg class="i"><use href="#s-fil"/></svg></span><span class="s-i"><svg class="i"><use href="#s-chm"/></svg></span><span class="s-i"><svg class="i"><use href="#s-ext"/></svg></span><span class="s-i"><svg class="i"><use href="#s-col"/></svg></span><span class="s-sep"></span><span class="s-i"><svg class="i"><use href="#s-sec"/></svg></span><span class="s-i"><svg class="i"><use href="#s-cln"/></svg></span><span class="s-i"><svg class="i"><use href="#s-mir"/></svg></span><span class="s-i"><svg class="i"><use href="#s-vb"/></svg></span><span class="s-i"><svg class="i"><use href="#s-bck"/></svg></span>
            </div>
            <div class="strip-stack">
              <div class="strip">
                <span class="s-grip"></span>
                <span class="s-i"><svg class="i"><use href="#s-ax"/></svg></span><span class="s-sep"></span><span class="s-i"><svg class="i"><use href="#s-axg"/></svg></span><span class="s-i"><svg class="i"><use href="#s-axu"/></svg></span><span class="s-sep"></span><span class="s-i"><svg class="i"><use href="#s-axb"/></svg></span><span class="s-i"><svg class="i"><use href="#s-axb"/></svg></span><span class="s-i"><svg class="i"><use href="#s-axr"/></svg></span><span class="s-sep"></span><span class="s-i"><svg class="i"><use href="#s-axo"/></svg></span><span class="s-i"><svg class="i"><use href="#s-axz"/></svg></span><span class="s-i"><svg class="i"><use href="#s-ax3"/></svg></span><span class="s-sep"></span><span class="s-i"><svg class="i"><use href="#s-rtx"/></svg></span><span class="s-i"><svg class="i"><use href="#s-rty"/></svg></span><span class="s-i"><svg class="i"><use href="#s-rtz"/></svg></span><span class="s-sep"></span><span class="s-i"><svg class="i"><use href="#s-axm"/></svg></span>
              </div>
              <div class="strip">
                <span class="s-grip"></span>
                <span class="s-i"><svg class="i"><use href="#o-end"/></svg></span><span class="s-i"><svg class="i"><use href="#o-cor"/></svg></span><span class="s-sep"></span><span class="s-i"><svg class="i"><use href="#o-lin"/></svg></span><span class="s-i"><svg class="i"><use href="#o-mid"/></svg></span><span class="s-i"><svg class="i"><use href="#o-x"/></svg></span><span class="s-i"><svg class="i"><use href="#o-xd"/></svg></span><span class="s-i"><svg class="i"><use href="#o-ext"/></svg></span><span class="s-sep"></span><span class="s-i"><svg class="i"><use href="#o-cen"/></svg></span><span class="s-i"><svg class="i"><use href="#o-qua"/></svg></span><span class="s-i"><svg class="i"><use href="#o-tan"/></svg></span><span class="s-sep"></span><span class="s-i"><svg class="i"><use href="#o-per"/></svg></span><span class="s-i"><svg class="i"><use href="#o-par"/></svg></span><span class="s-i"><svg class="i"><use href="#o-ins"/></svg></span><span class="s-i"><svg class="i"><use href="#o-nod"/></svg></span><span class="s-sep"></span><span class="s-i"><svg class="i"><use href="#o-nea"/></svg></span><span class="s-i"><svg class="i"><use href="#o-mag1"/></svg></span><span class="s-sep"></span><span class="s-i"><svg class="i"><use href="#o-mag2"/></svg></span>
              </div>
            </div>
          </div>
        </div>
        <div class="cmd"></div>
      </div>
    </div>
    <footer class="status">
      <span class="coord">3478.47</span>
      <div class="st-g g-a"><span class="st-c"><svg class="i"><use href="#sb-ang"/></svg></span><span class="st-c"><svg class="i"><use href="#sb-two"/></svg></span></div>
      <div class="st-g g-b"><span class="st-c scale"><svg class="i"><use href="#sb-an"/></svg><em>1:1</em><span class="c-arr"></span></span><span class="st-c"><svg class="i"><use href="#sb-an2"/></svg></span><span class="st-c"><svg class="i"><use href="#sb-an3"/></svg></span></div>
      <div class="st-g g-c"><span class="st-c"><svg class="i"><use href="#sb-gear"/></svg></span><span class="st-c"><svg class="i"><use href="#sb-lock"/></svg></span><span class="st-c"><svg class="i"><use href="#sb-or"/></svg></span></div>
      <div class="st-d"><span class="st-c"><svg class="i"><use href="#sb-plus"/></svg></span><span class="st-c"><svg class="i"><use href="#sb-ok"/></svg></span><span class="st-c"><svg class="i"><use href="#sb-clip"/></svg></span><span class="st-c"><svg class="i"><use href="#sb-bulb"/></svg></span><span class="st-c"><svg class="i"><use href="#sb-bf"/></svg></span></div>
      <span class="st-more"><span class="c-arr"></span></span>
      <span class="st-c"><svg class="i"><use href="#sb-win"/></svg></span>
    </footer>
  </div>

  <nav class="taskbar">
    <div class="start"><svg class="orb" viewBox="0 0 38 38"><circle cx="19" cy="19" r="18" fill="url(#orb)" stroke="#17324f"/><path d="M10 12c3-2 6-1 8 0l-1 6c-2-1-5-2-8 0z" fill="#e9532b"/><path d="M19 12c2 1 5 2 8 0l-1 6c-3 2-6 1-8 0z" fill="#74b83f"/><path d="M9 19c3-2 6-1 8 0l-1 6c-2-1-5-2-8 0z" fill="#2f9ae3"/><path d="M18 19c2 1 5 2 8 0l-1 6c-3 2-6 1-8 0z" fill="#f6c437"/></svg></div>
    <div class="tk-plain ie"><span class="ie-e">e</span><svg class="ie-ring" viewBox="0 0 34 34"><ellipse cx="17" cy="17" rx="18" ry="8" transform="rotate(-38 17 17)" fill="none" stroke="#f2c22c" stroke-width="2"/></svg></div>
    <div class="tk-btn"><svg class="tk-i" viewBox="0 0 32 30"><path d="M1 5h30v23H1z" fill="#f2d98a" stroke="#c9a650"/><path d="M3 2h26v6H3z" fill="#fff6d8" stroke="#d4b66a"/><rect x="7" y="3" width="3" height="2" fill="#2a9a2a"/><rect x="13" y="3" width="3" height="2" fill="#d23a3a"/><rect x="20" y="4" width="3" height="2" fill="#2a6fd0"/><path d="M7 14h18l2 14h-6v-8H11v8H5z" fill="#7fb5e0" stroke="#3e7fb8"/></svg></div>
    <div class="tk-plain media"><svg class="tk-i" viewBox="0 0 32 32"><rect x="3" y="2" width="24" height="28" fill="#6fb3dc" stroke="#3a7fb0"/><circle cx="14" cy="16" r="10" fill="#ee7a1e" stroke="#fff"/><path d="M11 10l9 6-9 6z" fill="#fff"/></svg></div>
    <div class="tk-btn b2"><svg class="tk-i" viewBox="0 0 32 34"><path d="M2 4c8-2 20-3 28-1l-3 12-9 2-4 15-5-15-4-3z" fill="none" stroke="#1f8bb0" stroke-width="3"/><path d="M12 8c3-3 8-2 8 1s-4 3-6 2" fill="none" stroke="#1f8bb0" stroke-width="2"/></svg></div>
    <div class="tk-btn b3"><svg class="tk-i" viewBox="0 0 32 32"><circle cx="16" cy="16" r="10" fill="none" stroke="#5f7f6a" stroke-width="6" stroke-dasharray="5.500 2.400"/><circle cx="16" cy="16" r="6.500" fill="none" stroke="#4d6d58" stroke-width="2"/><circle cx="16" cy="16" r="13" fill="none" stroke="#7d9a86" stroke-width=".5" stroke-dasharray="4 4"/></svg></div>
    <div class="tk-btn b4"><div class="acad-tile"><svg class="tk-a"><use href="#acad"/></svg></div></div>
    <div class="tray">
      <span class="lang">EN</span><span class="tray-up"></span>
      <svg class="tr"><use href="#tr-flag"/></svg><svg class="tr"><use href="#tr-bat"/></svg><svg class="tr"><use href="#tr-net"/></svg><svg class="tr last"><use href="#tr-spk"/></svg>
      <div class="clock"><div>16:51</div><div>10.04.2018</div></div>
      <div class="showdesk"></div>
    </div>
  </nav>

  <section class="explorer">
    <div class="ex-title"><span class="cap min"><i></i></span><span class="cap max"><i></i></span><span class="cap close">✕</span></div>
    <div class="ex-nav">
      <svg class="navbtns" viewBox="0 0 66 28"><circle cx="15" cy="14" r="12.500" fill="url(#backb)" stroke="#0b2f66"/><path d="M8 14l7-6v4h8v4h-8v4z" fill="#fff"/><circle cx="43" cy="14" r="11.500" fill="#c9d6e3" stroke="#7d92a8"/><path d="M50 14l-6-5v3h-8v4h8v3z" fill="#b4c4d4"/><path d="M58 12h7l-3.500 4z" fill="#2f6fad"/></svg>
      <div class="addr">
        <svg class="addr-ic" viewBox="0 0 16 18"><path d="M1 1l12 2v13L1 17z" fill="#eed27a"/><path d="M6 3l8 1v12l-8 1z" fill="#f8e7a6"/></svg>
        <span class="crumb lt">«</span><span class="crumb one-c">КМД 141.01.19...</span><span class="crumb-a"></span><span class="crumb">Стол_дроб</span><span class="crumb-a"></span>
        <span class="addr-dd"></span>
        <span class="addr-ref"><svg class="i14" viewBox="0 0 16 16"><path d="M6 1v9M3 5l3-4 3 4" fill="none" stroke="#2c6db5" stroke-width="2"/><path d="M11 15V6M8 11l3 4 3-4" fill="none" stroke="#2c6db5" stroke-width="2"/></svg></span>
      </div>
      <div class="ex-search"><span>Поиск: Ст...</span><svg class="i14" viewBox="0 0 16 16"><circle cx="10" cy="6" r="4" fill="none" stroke="#2c6db5" stroke-width="2"/><path d="M7 9l-5 6" stroke="#2c6db5" stroke-width="2.400"/></svg></div>
    </div>
    <div class="ex-tools">
      <span class="et org">Упорядочить<b></b></span>
      <span class="et add">Добавить в библиотеку<b></b></span>
      <span class="et more">»</span>
      <span class="view-btn"><span class="vb-l"><svg class="i16" viewBox="0 0 16 16"><path d="M1 1h4v4H1zm0 5h4v4H1zm0 5h4v4H1z" fill="#fff" stroke="#5b87b4"/><path d="M7 2h8M7 4h8M7 7h8M7 9h8M7 12h8M7 14h8" stroke="#2f5f95"/></svg></span><span class="vb-r"><b></b></span></span>
      <svg class="i16 pane-ic" viewBox="0 0 16 16"><rect x=".5" y="1.500" width="15" height="13" fill="#fff" stroke="#3a5f86"/><rect x="10" y="2" width="5" height="12" fill="#7cc0e8"/><rect x="1" y="2" width="14" height="2" fill="#a8c5de"/></svg>
      <span class="helpbtn">?</span>
    </div>
    <div class="ex-main">
      <div class="ex-tree">
        <div class="tgrp">
          <div class="th"><svg class="i16"><use href="#n-star"/></svg>Избранное</div>
          <div class="ti"><svg class="i16"><use href="#n-dl"/></svg>Загрузки</div>
          <div class="ti"><svg class="i16"><use href="#n-rec"/></svg>Недавние места</div>
          <div class="ti"><svg class="i16"><use href="#n-desk"/></svg>Рабочий стол</div>
          <div class="ti"><svg class="i16"><use href="#n-360"/></svg>Autodesk 360</div>
        </div>
        <div class="tgrp">
          <div class="th"><svg class="i16"><use href="#n-lib"/></svg>Библиотеки</div>
          <div class="ti"><svg class="i16"><use href="#n-vid"/></svg>Видео</div>
          <div class="ti"><svg class="i16"><use href="#n-doc"/></svg>Документы</div>
          <div class="ti"><svg class="i16"><use href="#n-pic"/></svg>Изображения</div>
          <div class="ti"><svg class="i16"><use href="#n-mus"/></svg>Музыка</div>
        </div>
        <div class="tgrp"><div class="th"><svg class="i16"><use href="#n-home"/></svg>Домашняя группа</div></div>
        <div class="tgrp">
          <div class="th"><svg class="i16"><use href="#n-pc"/></svg>Компьютер</div>
          <div class="ti"><svg class="i16"><use href="#n-c"/></svg>Локальный диск (C:)</div>
          <div class="ti"><svg class="i16"><use href="#n-cd"/></svg>CD-дисковод (D:) acad2014</div>
          <div class="ti"><svg class="i16"><use href="#n-net"/></svg>XPTRANS (\\vboxsrv) (E:)</div>
          <div class="ti"><svg class="i16"><use href="#n-net"/></svg>объекты (\\Vboxsvr) (F:)</div>
          <div class="ti"><svg class="i16"><use href="#n-net"/></svg>_GAMEDEV (\\vboxsrv) (G:)</div>
          <div class="ti hover"><svg class="i16"><use href="#n-disk"/></svg>Pilot-Storage (X:)</div>
          <div class="ti"><svg class="i16"><use href="#n-disk"/></svg>3D-Storage (Y:)</div>
          <div class="ti"><svg class="i16"><use href="#n-net"/></svg>_gamedev (\\Vboxsvr) (Z:)</div>
          <div class="ti"><svg class="i16"><use href="#n-360"/></svg>Autodesk 360</div>
          <div class="ti"><svg class="i16"><use href="#n-nf"/></svg>объекты (Vboxsvr)</div>
        </div>
        <div class="tgrp">
          <div class="th"><svg class="i16"><use href="#n-globe"/></svg>Сеть</div>
          <div class="ti"><svg class="i16"><use href="#n-pc"/></svg>ANNAVOLKNET</div>
          <div class="ti"><svg class="i16"><use href="#n-pc"/></svg>ASUS</div>
          <div class="ti"><svg class="i16"><use href="#n-pc"/></svg>BILEYG-W7</div>
          <div class="ti"><svg class="i16"><use href="#n-pc"/></svg>VBOXSVR</div>
        </div>
      </div>
      <div class="ex-files">
        <div class="frow"><span class="fic"><svg class="ic-f"><use href="#folder-d"/></svg></span><div class="ft"><div class="fn">Балки</div></div></div>
        <div class="frow"><span class="fic"><svg class="ic-f"><use href="#folder"/></svg><svg class="ov"><use href="#ov-edit"/></svg></span><div class="ft"><div class="fn">Колонны</div></div></div>
        <div class="frow"><span class="fic"><svg class="ic-f"><use href="#folder"/></svg></span><div class="ft"><div class="fn">Лестница</div></div></div>
        <div class="frow"><span class="fic"><svg class="ic-f"><use href="#folder"/></svg><svg class="ov tick"><use href="#ov-check"/></svg></span><div class="ft"><div class="fn">Лоток-разгр</div></div></div>
        <div class="frow"><span class="fic"><svg class="ic-f"><use href="#folder-s"/></svg></span><div class="ft"><div class="fn">Ограждения</div></div></div>
        <div class="frow"><span class="fic"><svg class="ic-f"><use href="#folder-d"/></svg><svg class="ov tick"><use href="#ov-check"/></svg></span><div class="ft"><div class="fn">ОСИ</div></div></div>
        <div class="frow"><span class="fic"><svg class="ic-f"><use href="#folder"/></svg></span><div class="ft"><div class="fn">Площадки</div></div></div>
        <div class="frow"><span class="fic"><svg class="ic-f"><use href="#folder"/></svg></span><div class="ft"><div class="fn">Связи</div></div></div>
        <div class="frow"><span class="fic"><svg class="ic-f"><use href="#folder"/></svg></span><div class="ft"><div class="fn">СПЕЦИФИКАЦИЯ</div></div></div>
        <div class="frow"><span class="fic"><svg class="ic-f"><use href="#folder-d"/></svg><svg class="ov tick"><use href="#ov-check"/></svg></span><div class="ft"><div class="fn">Уголки</div></div></div>
        <div class="frow"><span class="fic"><svg class="ic-d"><use href="#doc"/></svg></span><div class="ft"><div class="fn">lockfile.lck</div><div class="fs"><i>Тип:</i> Файл "LCK"</div></div></div>
        <div class="frow"><span class="fic"><svg class="ic-d"><use href="#ssm"/></svg><svg class="ov"><use href="#ov-edit"/></svg></span><div class="ft"><div class="fn">Стол Дробилки</div><div class="fs"><i>Тип:</i> Подшивка AutoCAD</div></div></div>
        <div class="frow"><span class="fic"><svg class="ic-d"><use href="#doc"/></svg></span><div class="ft"><div class="fn">Стол_Дроб.bak</div><div class="fs"><i>Тип:</i> Файл "BAK"</div></div></div>
        <div class="frow"><span class="fic"><svg class="ic-w"><use href="#dwg"/></svg><svg class="ov ovw"><use href="#ov-edit"/></svg></span><div class="ft"><div class="fn">Стол_Дроб</div></div></div>
        <div class="frow"><span class="fic"><svg class="ic-d"><use href="#doc"/></svg></span><div class="ft"><div class="fn">Стол_Дроб.dwg.~tmp</div><div class="fs"><i>Тип:</i> Файл "~TMP"</div></div></div>
        <div class="frow"><span class="fic"><svg class="ic-d"><use href="#doc"/></svg></span><div class="ft"><div class="fn">Стол_Дроб.dwg0.~tmp</div><div class="fs"><i>Тип:</i> Файл "~TMP"</div></div></div>
        <div class="frow"><span class="fic"><svg class="ic-d"><use href="#doc"/></svg></span><div class="ft"><div class="fn">Стол_Дроб.dwl</div><div class="fs"><i>Тип:</i> Файл "DWL"</div></div></div>
      </div>
      <div class="ex-scroll"><span class="sb-up"></span><span class="sb-th"><span class="sb-g"></span></span><span class="sb-dn"></span></div>
    </div>
    <div class="ex-details"><svg class="big-f" viewBox="0 0 38 46"><path d="M10 8l20 4 5 28-14 2z" fill="#c8ccd0" opacity=".4"/><path d="M3 2l22 4v30L3 40z" fill="#f2df98"/><path d="M1 1l9 6 1 38-8-4z" fill="url(#fy)" stroke="#e2c880" stroke-width=".5"/><path d="M25 6v30l-15 8V7z" fill="#f5e3a0"/></svg><span>Элементов: 18</span></div>
  </section>
</div>
</body>
</html>
```

FILE: styles.css
```css
*{box-sizing:border-box}
html,body{margin:0;padding:0;height:100%}
body{font-family:"Noto Sans","Liberation Sans",sans-serif;font-size:11.600px;letter-spacing:-.17px;background:#666;overflow:hidden}
.sprite{position:absolute;width:0;height:0;overflow:hidden}
.sy-t{font-family:"Liberation Sans",sans-serif;letter-spacing:0}
.sy-t.b{font-weight:700}
.i{width:18px;height:18px;display:block;flex:none}
.i14{width:14px;height:14px;display:block;flex:none}
.i16{width:16px;height:16px;display:block;flex:none}
.i18{width:18px;height:18px;display:block;flex:none}
.desk{position:relative;width:1855px;height:1009px;overflow:hidden;display:flex;flex-direction:column}
.app{height:970px;flex:none;display:flex;flex-direction:column;background:#666;overflow:hidden}

/* title bar */
.title{position:relative;height:45px;flex:none;border-bottom:1px solid #4f4f4f;background:repeating-linear-gradient(135deg,#a4a4a4 0 1px,#9e9e9e 1px 3px);color:#f2f2f2}
.appbtn{position:absolute;left:0;top:0;width:41px;height:43px;background:linear-gradient(#8d8d8d,#6f6f6f);border:1px solid #3a3a3a;display:flex;align-items:center;padding-left:3px}
.logo{width:26px;height:30px}
.caret{width:0;height:0;border:4px solid transparent;border-top:5px solid #444;margin:5px 0 0 2px}
.titletext{position:absolute;left:786px;top:3px;line-height:18px;white-space:nowrap;color:#f0f0f0}
.menus{position:absolute;left:569px;top:26px;line-height:18px;display:flex;white-space:nowrap;color:#f1f1f1}
.menus span:nth-child(1){width:105px}
.menus span:nth-child(2){width:117px}
.menus span:nth-child(3){width:52px}
.infocenter{position:absolute;left:1346px;top:0;height:23px;display:flex;align-items:center}
.tri-r{width:0;height:0;border:4px solid transparent;border-left:6px solid #111;margin-right:2px}
.search-box{width:178px;height:21px;background:#fff;border:1px solid #777;font-style:italic;color:#777;font-size:11px;line-height:19px;padding-left:2px;white-space:nowrap;overflow:hidden;margin-right:5px}
.ic-user{margin-left:7px}
.login{color:#f2f2f2;margin-left:5px;white-space:nowrap;font-size:11.600px}
.mini{font-size:9px;color:#555;margin-left:4px;width:8px}
.x-mark{font:700 17px "Liberation Sans",sans-serif;color:#22408c;margin-left:8px;width:14px}
.ic-tri{margin-left:8px}
.help-c{width:17px;height:17px;border-radius:50%;background:#fff;border:2px solid #3f6fb5;color:#1d4ea3;font:700 12px/13px "Liberation Sans",sans-serif;text-align:center;margin-left:12px}
.wctl{position:absolute;left:460px;top:3px;width:46px}
.wrow{height:21px;display:flex;align-items:center;gap:4px}
.w-min{width:10px;height:3px;background:#222;margin-top:7px}
.w-max{width:11px;height:11px;border:1.500px solid #222;background:linear-gradient(#222 2px,transparent 2px)}
.w-x{font:700 13px "Liberation Sans",sans-serif;color:#222;margin-left:3px}

.ribbonband{height:27px;flex:none;background:linear-gradient(#8f8f8f,#6b6b6b);position:relative;overflow:hidden}
.doc-tab{position:absolute;left:22px;top:6px;width:140px;height:21px;background:linear-gradient(#b5b5b5,#9b9b9b);border-radius:12px 4px 0 0;padding-left:10px;line-height:21px;color:#333}
.tbrow{height:24px;flex:none;margin-top:4px;padding:0 0 1px;display:flex;gap:3px;background:#5a5a5a;border-top:1px solid #a8a8a8;overflow:hidden}
.tbrow.second{margin-top:0;height:27px;border-top:4px solid #5a5a5a;padding:0;gap:3px}
.tg{height:100%;background:#eee;display:flex;align-items:center;flex:none;overflow:hidden}
.grip{width:8px;height:100%;flex:none;background:#5a5a5a radial-gradient(#cfcfcf .6px,transparent .9px) 1px 1px/3px 3px}
.slot{width:23px;height:100%;display:flex;align-items:center;justify-content:center;flex:none}
.sep{width:5px;height:80%;flex:none;background:linear-gradient(90deg,transparent 2px,#777 2px,#777 3px,transparent 3px)}
.push{flex:1}
.g1a{width:738px}
.g1b{width:598px;background:#5a5a5a;padding-right:1px}
.g1b .slot{background:#eee}
.g1b .combo{margin-left:3px;margin-right:4px}
.g1b .combo:last-child{margin-right:0}
.g1c{width:157px}
.g1d{width:228px}
.g1d .combo{margin-left:2px}
.g1e{flex:1}
.g2a{width:669px}
.g2b{width:76px}
.g2c{width:581px;background:#5a5a5a;gap:6px}
.g2c .grip{margin-right:-5px}
.g2d{width:274px}
.g2e{flex:1}
.combo{height:100%;background:linear-gradient(#f4f4f4,#d6d6d6);border:1px solid #bbb;border-radius:3px;display:flex;align-items:center;padding:0 5px 0 4px;flex:none;color:#111;white-space:nowrap;overflow:hidden}
.c119{width:119px}.c96{width:96px}.c148{width:148px}.c160{width:160px}.c124{width:124px}.c120{width:120px}
.combo.blank{background:#fff}
.combo.blank .c-txt{background:#eee;height:16px}
.combo.dis{background:#f0f0f0;color:#777}
.c-txt{flex:1;padding-left:2px}
.c-txt.center{padding-left:15px}
.c-txt.c1{padding-left:12px}
.ltline{height:1px;background:#000;flex:none}
.l1{width:64px}
.l2{width:40px}
.ltline + .c-txt{padding-left:12px}
.swatch{width:10px;height:10px;background:#fff;border:1px solid #111;margin-right:3px;flex:none}
.c-arr{width:0;height:0;flex:none;border:4px solid transparent;border-top:5px solid #111;border-bottom:0}
.c-arr.off{border-top-color:#bbb}
.textbox{width:140px;height:20px;background:#f2f2f2;border:1px solid #ccc;margin:0 5px 0 2px;flex:none}
.under{height:5px;flex:none;background:linear-gradient(#666 0,#666 3px,#9a9a9a 3px,#888 5px)}

/* main */
.main{height:815px;flex:none;display:flex}
.side{width:551px;flex:none;background:#6a6a6a;overflow:hidden;display:flex;flex-direction:column}
.p-hdr{background:linear-gradient(#b4b4b4,#8f8f8f);color:#111;font-size:13px;padding-left:12px;border-radius:6px 6px 0 0;position:relative;flex:none;white-space:nowrap;display:flex;align-items:center;gap:6px}
.p-hdr.first{height:20px;margin-top:1px}
.p-hdr.two{height:22px}
.p-hdr.three{height:26px}
.dots{width:3px;height:12px;margin-left:-9px;background:radial-gradient(#333 .7px,transparent 1px) 0 0/3px 3px}
.p-body.one{height:112px;background:#ededed;padding:12px 0 0 8px;flex:none}
.open-btn{width:76px;height:22px;border:1px solid #888;border-radius:3px;background:linear-gradient(#fafafa,#ddd);line-height:20px;padding-left:3px;font-size:13px}
.sheets{margin-top:12px;width:200px;border:1px solid #aaa}
.sheets-h{height:19px;background:#b9b9b9;font-weight:700;padding-left:5px;line-height:19px;font-size:12px}
.sheets-b{height:35px;background:#fff}
.p-gap{height:5px;flex:none}
.cur-row{height:26px;background:#f0f0f0;flex:none;padding:5px 0 0 3px;font-size:13px;white-space:nowrap}
.cur-row span{background:#e6e6e6}
.tool-row{height:24px;background:#f0f0f0;display:flex;align-items:center;gap:6px;padding-left:2px;flex:none}
.layer-wrap{height:531px;flex:none;display:flex;background:#f0f0f0}
.rail{width:19px;height:100%;background:#ececec;border-right:1px solid #666;display:flex;flex-direction:column;justify-content:space-between;align-items:center;font-size:20px;line-height:22px;padding:4px 0 0;color:#000;flex:none}
.layers{margin:6px 0 0 4px;flex:1;border:1px solid #111;background:#fff;display:flex;flex-direction:column}
.l-head{height:23px;background:linear-gradient(#fafafa,#e8e8e8);padding-left:9px;line-height:22px;flex:none}
.l-rows{height:486px;flex:none}
.l-row{height:18px;display:flex;align-items:center;padding-left:2px}
.l-row.cur{background:#e3e3e3}
.para{width:16px;height:8px;display:block}
.cmk{width:16px;height:16px;display:block}
.l-scroll{height:14px;background:#f0f0f0;flex:none;display:flex;align-items:center;padding-left:4px;gap:5px}
.l-thumb{width:60px;height:14px;background:linear-gradient(#fff,#d0d0d0);border:1px solid #bbb}
.tri-l{width:0;height:0;border:4px solid transparent;border-right:4px solid #555;border-left:0}
.foot-row{height:34px;background:#ececec;display:flex;align-items:center;padding-left:1px;gap:6px;flex:none}
.foot-ic{width:29px;height:22px;border:1px solid #ccc;border-radius:3px;background:linear-gradient(#fff,#ddd);display:flex;align-items:center;gap:1px}
.foot-in{width:200px;height:22px;background:#fff;border:1px solid #ccc;line-height:20px;padding-left:2px;font-size:13px}
.p-end{height:14px;background:linear-gradient(#dedede 0,#dedede 10px,#6a6a6a 10px);flex:none}

.work{flex:1;min-width:0;display:flex;flex-direction:column}
.work-top{height:780px;flex:none;display:flex}
.drawing{width:1188px;flex:none;display:flex;flex-direction:column;height:775px}
.viewrow{height:758px;flex:none;display:flex}
.canvas{flex:1;position:relative;background:#212830;overflow:hidden}
.cad{position:absolute;inset:0;width:100%;height:100%;display:block}
.cad-l{fill:none;stroke:#ff7f00;stroke-width:1;shape-rendering:crispEdges}
.cad-n text{font:700 13px "Liberation Sans",sans-serif;letter-spacing:0;fill:#ff8a1a;stroke:#fff;stroke-width:.9px}
.u-z{font:300 20px "Inter","Liberation Sans",sans-serif;fill:#1d62d6}
.u-y{font:300 15px "Inter","Liberation Sans",sans-serif;fill:#1ea01e}
.u-x{font:300 15px "Inter","Liberation Sans",sans-serif;fill:#d22525}
.vc-t{font:48px "Noto Sans",sans-serif;fill:#aeb1b6}
.vc-f{font-family:"Noto Sans",sans-serif;fill:#44474d}
.vc-m{font:30px "Liberation Sans",sans-serif;fill:#4c4f63}
.vp-label{position:absolute;left:0;top:6px;color:#e6e6e6;font-size:11px;line-height:16px;white-space:nowrap}
.vscroll{width:19px;flex:none;background:#f1f1f1;border-left:1px solid #ddd;position:relative;display:flex;flex-direction:column;align-items:center;padding:7px 0 6px;justify-content:space-between}
.tri-u{width:0;height:0;border:4px solid transparent;border-bottom:5px solid #555;border-top:0}
.tri-d{width:0;height:0;border:4px solid transparent;border-top:5px solid #555;border-bottom:0}
.v-thumb{position:absolute;left:1px;top:491px;width:15px;height:15px;background:linear-gradient(90deg,#fff,#bbb);border:1px solid #aaa;border-radius:2px}
.tabsrow{height:17px;flex:none;background:#f2f2f2;display:flex;align-items:center;border-top:1px solid #aaa;font-size:11px;line-height:15px;overflow:hidden;border-bottom:1px solid #fff}
.tab-prev{width:24px;padding-left:1px;flex:none}
.tab-cur{position:relative;flex:none;width:110px;padding-left:4px;white-space:nowrap}
.tab-cur::before{content:"";position:absolute;inset:0;border:solid #555;border-width:0 1px;transform:skewX(-18deg)}
.hscroll{margin-left:auto;width:485px;height:15px;background:#ececec;display:flex;align-items:center;padding:0 30px 0 12px;position:relative}
.h-thumb{position:absolute;left:371px;top:0;width:14px;height:15px;background:linear-gradient(#fff,#bbb);border:1px solid #aaa;border-radius:2px}
.tri-rr{width:0;height:0;margin-left:auto;border:4px solid transparent;border-left:4px solid #555;border-right:0}
.strips{flex:1;display:flex;padding-left:4px;gap:4px;align-items:flex-start;overflow:hidden}
.strip-stack{display:flex;flex-direction:column;gap:2px}
.strip{width:24px;background:#eee;border:1px solid #555;border-top:0;display:flex;flex-direction:column;align-items:center;flex:none}
.s-grip{width:24px;height:7px;background:#555 radial-gradient(#bbb .6px,transparent .9px) 1px 1px/3px 3px;flex:none}
.s-i{height:22px;display:flex;align-items:center;justify-content:center;flex:none}
.s-sep{height:6px;width:18px;flex:none;background:linear-gradient(transparent 2px,#aaa 2px,#aaa 3px,transparent 3px)}
.wide-sep .s-sep{height:7px}
.cmd{height:35px;background:#fff;flex:none;border-top:1px solid #aaa}

.status{height:23px;flex:none;background:linear-gradient(#898989,#5e5e5e);border-top:2px solid #1a1a1a;display:flex;align-items:center;padding-right:5px;position:relative;overflow:hidden}
.coord{position:absolute;left:12px;top:2px;font-size:12px;color:#111;white-space:nowrap}
.st-g{display:flex;background:#9d9d9d;height:100%;gap:1px;flex:none}
.g-a{margin-left:1486px}
.g-b{margin-left:12px}
.g-c{margin-left:7px}
.st-c{width:21px;height:100%;display:flex;align-items:center;justify-content:center;flex:none;background:linear-gradient(#b0b0b0,#8e8e8e)}
.st-c.scale{width:50px;gap:2px}
.st-c.scale em{font-style:normal;font-size:13px;color:#222}
.st-d{display:flex;margin-left:2px;height:100%;background:#4e4e4e;padding:2px 18px 2px 4px;gap:1px;flex:none}
.st-d .st-c{background:#9a9a9a;width:21.500px}
.st-more{width:9px;display:flex;justify-content:center;margin-left:4px;background:#bdbdbd;height:100%;align-items:center}
.status > .st-c{margin-left:2px;width:20px}

/* taskbar */
.taskbar{height:39px;flex:none;display:flex;align-items:stretch;background:linear-gradient(90deg,#a5bfda 0,#a5bfda 1575px,#7d94ae 1640px,#7d94ae 100%);border-top:1px solid #c5d5e6;position:relative}
.start{width:54px;display:flex;align-items:center;justify-content:center;flex:none}
.orb{width:37px;height:37px}
.tk-plain{display:flex;align-items:center;justify-content:center;flex:none;position:relative}
.ie{width:67px}
.ie-e{font:700 34px/34px "Liberation Sans",sans-serif;color:#1d7fd8;margin-top:-5px}
.ie-ring{position:absolute;left:16px;top:2px;width:34px;height:34px;overflow:visible}
.media{width:68px;margin-left:6px}
.tk-btn{width:51px;background:linear-gradient(#c9d9ea,#a9c2dc);border:1px solid #708cab;border-bottom:0;border-radius:3px 3px 0 0;box-shadow:inset 0 0 0 1px #d8e4f0;display:flex;align-items:center;justify-content:center;flex:none}
.b2{width:58px}
.b3{width:59px;margin-left:3px}
.b4{width:58px;margin-left:4px}
.tk-i{width:32px;height:32px;display:block}
.acad-tile{width:32px;height:32px;background:linear-gradient(90deg,#e4202a,#ffd0d0);display:flex;align-items:center;justify-content:center}
.tk-a{width:24px;height:24px;display:block}
.tray{margin-left:auto;display:flex;align-items:center;color:#f0f4f8;height:100%}
.lang{margin-right:15px;margin-top:-6px;font-size:12px;width:16px}
.tray-up{width:0;height:0;border:5px solid transparent;border-bottom:5px solid #eef1f4;border-top:0;margin-right:11px}
.tr{width:18px;height:18px;display:block;margin-right:6px}
.tr.last{margin-right:2px}
.clock{width:82px;text-align:center;font-size:12px;line-height:18px}
.showdesk{width:13px;height:100%;background:linear-gradient(90deg,#97a9bd,#8298af);border:1px solid #566c84}

/* explorer */
.explorer{position:absolute;left:51px;top:0;width:500px;height:968px;background:linear-gradient(#a6bfd8 0,#b3cbe2 10%,#b6cfe8 100%);border:1px solid #1e3047;border-top-color:#3b4f66;border-radius:7px 7px 0 0;padding:0 6px 6px;display:flex;flex-direction:column;box-shadow:inset 0 0 0 1px #cfe2f3}
.ex-title{height:34px;flex:none;display:flex;justify-content:flex-end;align-items:flex-start;padding-top:9px;gap:2px;padding-right:2px}
.cap{height:17px;border:1px solid #5b7089;border-radius:3px;display:flex;align-items:center;justify-content:center;background:linear-gradient(#d6e2ee,#a7bdd3 50%,#9bb2c9)}
.cap.min,.cap.max{width:31px}
.cap.min i{width:10px;height:3px;background:#fff;border:1px solid #445;margin-top:6px}
.cap.max i{width:10px;height:9px;background:#fff;border:1px solid #445;box-shadow:inset 0 2px #445}
.cap.close{width:31px;color:#fff;font-weight:700;font-size:11px;background:linear-gradient(#e4a49c,#c2473d 50%,#b2352a);border-color:#76241d;text-shadow:0 0 2px #400}
.ex-nav{height:23px;flex:none;display:flex;align-items:center;margin-bottom:7px}
.navbtns{width:66px;height:28px;flex:none;margin:0 5px -1px 0;overflow:visible}
.addr{width:306px;height:23px;background:linear-gradient(#eaf2fa,#fff);border:1px solid #8fa8c0;border-radius:2px;display:flex;align-items:center;color:#111;white-space:nowrap;flex:none}
.addr-ic{width:15px;height:18px;margin-left:3px;flex:none}
.crumb{flex:none;margin-right:9px}
.crumb.lt{margin:0 7px 0 5px;font-size:13px}
.crumb-a{width:0;height:0;border:4px solid transparent;border-left:5px solid #222;border-right:0;margin-right:9px;flex:none}
.addr-dd{width:0;height:0;border:4px solid transparent;border-top:5px solid #1a3d66;border-bottom:0;margin-left:auto;margin-right:7px}
.addr-ref{width:25px;height:100%;border-left:1px solid #8fa8c0;display:flex;align-items:center;justify-content:center;flex:none}
.ex-search{width:102px;height:23px;background:linear-gradient(#eef4fa,#fff);border:1px solid #8fa8c0;margin-left:6px;flex:none;display:flex;align-items:center;justify-content:space-between;padding:0 5px 0 8px;font-style:italic;color:#6d6d6d;white-space:nowrap}
.ex-tools{height:30px;flex:none;background:linear-gradient(#f7fbfe,#e6eff8 50%,#dce8f4);border-bottom:1px solid #a9bed3;display:flex;align-items:center;color:#1e395b;white-space:nowrap;padding-left:18px;position:relative}
.et{display:flex;align-items:center;flex:none}
.et b{width:0;height:0;border:4px solid transparent;border-top:4px solid #1e395b;border-bottom:0;margin-left:6px}
.et.org{width:116px}
.et.add{width:170px}
.et.more{font-size:15px;line-height:15px;margin-top:-3px}
.view-btn{margin-left:auto;width:45px;height:24px;border:1px solid #a7bcd0;border-radius:3px;display:flex;flex:none;background:#eef4fa}
.vb-l{width:28px;display:flex;align-items:center;justify-content:center;border-right:1px solid #a7bcd0}
.vb-r{flex:1;display:flex;align-items:center;justify-content:center}
.vb-r b{width:0;height:0;border:4px solid transparent;border-top:4px solid #1e395b;border-bottom:0}
.pane-ic{margin-left:17px}
.helpbtn{width:16px;height:16px;border-radius:50%;background:#2d5fa8;color:#fff;font:700 12px/16px "Liberation Sans",sans-serif;text-align:center;margin:0 15px 0 20px;box-shadow:0 0 0 1.500px #9db3c9;flex:none}
.ex-main{flex:1;min-height:0;background:#fcfcfc;display:flex;overflow:hidden}
.ex-tree{width:219px;flex:none;border-right:1px solid #d6e4f2;padding-top:10px;color:#1f2a3a;white-space:nowrap;overflow:hidden}
.tgrp{margin-bottom:21px}
.th{height:21px;display:flex;align-items:center;gap:5px;padding-left:20px}
.ti{height:21px;display:flex;align-items:center;gap:5px;padding-left:30px}
.ti.hover{background:linear-gradient(#fafafa,#e4e4e4);border:1px solid #dcdcdc;border-radius:3px;margin:0 1px;padding-left:28px}
.ex-files{flex:1;min-width:0;padding:7px 10px 0 19px;overflow:hidden}
.frow{height:48px;border-bottom:1px solid #dfe4ea;display:flex;flex:none;position:relative}
.fic{width:39px;flex:none;position:relative;padding:6px 0 0 2px;display:block}
.ic-f{width:24px;height:32px;display:block}
.ic-d{width:25px;height:30px;display:block;margin:4px 0 0 2px}
.ic-w{width:30px;height:18px;display:block;margin:14px 0 0 2px}
.ov{position:absolute;left:0;top:23px;width:16px;height:16px}
.ov.tick{top:26px}
.ov.ovw{top:16px}
.ft{flex:1;padding-top:5px;white-space:nowrap;color:#1a1a1a}
.fn{font-size:14.600px;line-height:20px;letter-spacing:-.2px}
.fs{line-height:18px;color:#1f2f44;margin-top:1px}
.fs i{font-style:normal;color:#6d7580}
.ex-scroll{width:16px;flex:none;background:#f0f0f0;border-left:1px solid #e4e4e4;position:relative;display:flex;flex-direction:column;align-items:center}
.sb-up{position:absolute;top:8px;width:0;height:0;border:4px solid transparent;border-bottom:4px solid #555;border-top:0}
.sb-dn{position:absolute;bottom:6px;width:0;height:0;border:4px solid transparent;border-top:4px solid #555;border-bottom:0}
.sb-th{position:absolute;top:19px;left:0;width:15px;height:722px;background:linear-gradient(90deg,#f6f6f6,#d9d9d9);border:1px solid #bfbfbf;border-radius:2px;display:flex;align-items:center;justify-content:center}
.sb-g{width:7px;height:7px;background:repeating-linear-gradient(#777 0 1px,#eee 1px 2px)}
.ex-details{height:53px;flex:none;background:#f1f5fb;border-top:1px solid #d5e0ec;display:flex;align-items:flex-start;position:relative;color:#33445c}
.big-f{width:38px;height:46px;margin:4px 0 0 20px;flex:none}
.ex-details span{margin:6px 0 0 21px;line-height:18px}
```
